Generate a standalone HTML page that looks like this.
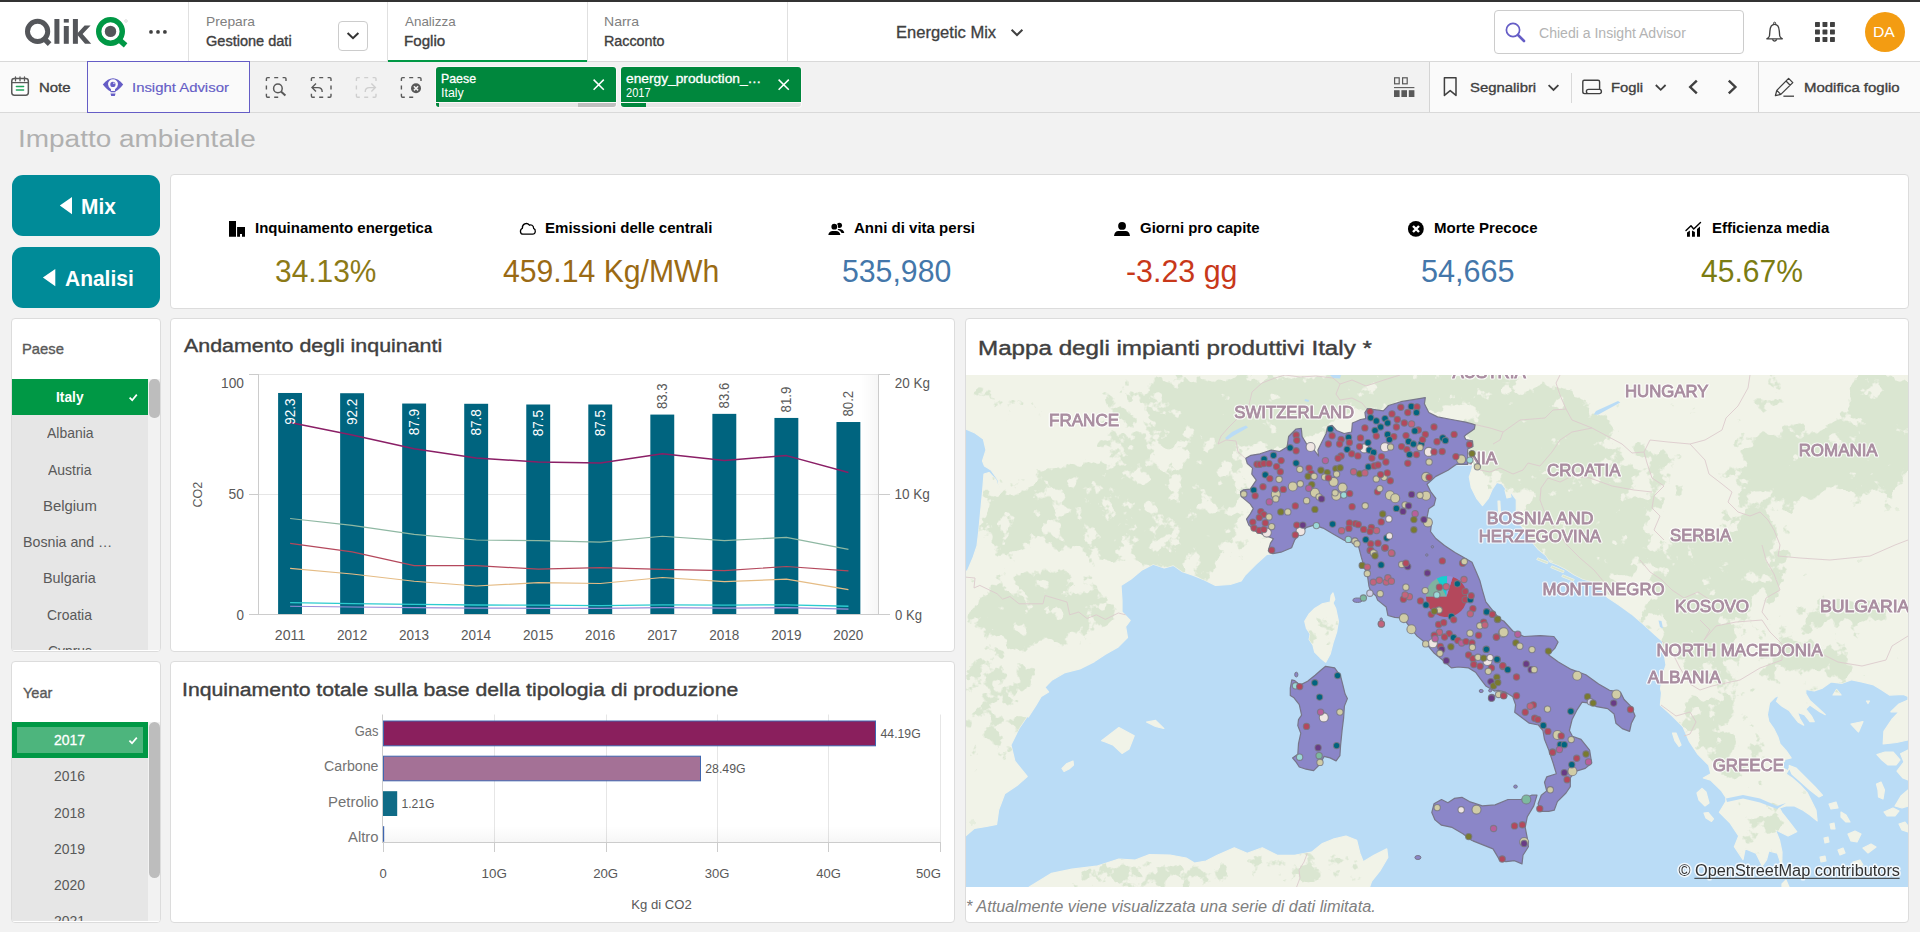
<!DOCTYPE html>
<html>
<head>
<meta charset="utf-8">
<title>Energetic Mix</title>
<style>
*{box-sizing:border-box;margin:0;padding:0}
html,body{width:1920px;height:932px;overflow:hidden;background:#f2f2f2;font-family:"Liberation Sans",sans-serif;color:#404040}
.abs{position:absolute}
.t{position:absolute;white-space:nowrap;line-height:1;transform-origin:0 50%}
#topline{left:0;top:0;width:1920px;height:2px;background:#333}
#header{left:0;top:2px;width:1920px;height:60px;background:#fff;border-bottom:1px solid #d9d9d9}
#toolbar{left:0;top:62px;width:1920px;height:51px;background:#f2f2f2;border-bottom:1px solid #d9d9d9}
.vdiv{position:absolute;width:1px;background:#e0e0e0}
.panel{position:absolute;background:#fff;border:1px solid #dcdcdc;border-radius:4px;overflow:hidden}
.btn{position:absolute;left:12px;width:148px;height:61px;background:#008b98;border-radius:11px;color:#fff}
.li{position:absolute;left:0;width:136px;height:36px;text-align:center;font-size:14.5px;line-height:36px;color:#595959}
</style>
</head>
<body>
<div class="abs" id="topline"></div>
<div class="abs" id="header"></div>
<svg class="abs" style="left:20px;top:12px" width="115" height="40" viewBox="20 12 115 40">
<g fill="none" stroke="#54565a" stroke-width="5">
<circle cx="37.6" cy="31.4" r="10.1"/>
<path d="M43.6 38.2 L49.6 44.2" stroke-width="5.2"/>
</g>
<g fill="#54565a">
<rect x="54.4" y="19" width="5" height="24.8"/>
<rect x="63.8" y="26" width="5" height="17.8"/>
<rect x="63.8" y="19" width="5" height="3.6"/>
<rect x="72.9" y="19" width="5" height="24.8"/>
<path d="M77.5 33.2 L84.6 25.6 L90.6 25.6 L82.6 34 L91.2 43.8 L85 43.8 L77.5 35 Z"/>
</g>
<circle cx="110.5" cy="31.4" r="11.8" fill="none" stroke="#009845" stroke-width="5.4"/>
<path d="M119 39.6 L125.6 45.4" stroke="#009845" stroke-width="5.4" fill="none"/>
<circle cx="110.5" cy="31.4" r="5.7" fill="#54565a"/>
<circle cx="126" cy="21" r="1.3" fill="none" stroke="#bbb" stroke-width="0.5"/>
</svg>
<svg class="abs" style="left:147px;top:28px" width="22" height="8"><g fill="#404040"><circle cx="4" cy="3.9" r="1.9"/><circle cx="11" cy="3.9" r="1.9"/><circle cx="17.9" cy="3.9" r="1.9"/></g></svg>
<div class="vdiv" style="left:188px;top:2px;height:59px"></div>
<div class="vdiv" style="left:387px;top:2px;height:59px"></div>
<div class="vdiv" style="left:587px;top:2px;height:59px"></div>
<div class="vdiv" style="left:787px;top:2px;height:59px"></div>
<div class="t" style="left:205.50px;top:15px;font-size:13.4px;color:#808080;transform:scaleX(1.0293);">Prepara</div>
<div class="t" style="left:205.87px;top:35px;font-size:13.8px;color:#404040;transform:scaleX(1.0531);-webkit-text-stroke:0.35px #404040;">Gestione dati</div>
<div class="abs" style="left:338px;top:21px;width:30px;height:30px;border:1px solid #ccc;border-radius:4px;background:#fff"></div>
<svg class="abs" style="left:345px;top:30px" width="16" height="12"><path d="M2.6 3 L8 8.2 L13.4 3" fill="none" stroke="#333" stroke-width="2"/></svg>
<div class="t" style="left:405.00px;top:15px;font-size:13.4px;color:#808080;">Analizza</div>
<div class="t" style="left:403.79px;top:35px;font-size:13.8px;color:#404040;transform:scaleX(1.0967);-webkit-text-stroke:0.35px #404040;">Foglio</div>
<div class="abs" style="left:388px;top:60px;width:199px;height:2px;background:#009845"></div>
<div class="t" style="left:604.38px;top:15px;font-size:13.4px;color:#808080;transform:scaleX(1.0485);">Narra</div>
<div class="t" style="left:604.36px;top:35px;font-size:13.8px;color:#404040;transform:scaleX(1.0367);-webkit-text-stroke:0.35px #404040;">Racconto</div>
<div class="t" style="left:895.68px;top:24px;font-size:16.3px;color:#404040;transform:scaleX(1.0153);-webkit-text-stroke:0.3px #404040;">Energetic Mix</div>
<svg class="abs" style="left:1009px;top:26px" width="16" height="12"><path d="M2.6 3.8 L8 9 L13.4 3.8" fill="none" stroke="#404040" stroke-width="2"/></svg>
<div class="abs" style="left:1494px;top:10px;width:250px;height:44px;border:1px solid #ccc;border-radius:4px;background:#fff"></div>
<svg class="abs" style="left:1503px;top:20px" width="24" height="24"><circle cx="10" cy="10" r="6.6" fill="none" stroke="#655dc6" stroke-width="1.7"/><path d="M15 15 L21 21" stroke="#655dc6" stroke-width="2.6" stroke-linecap="round"/></svg>
<div class="t" style="left:1539.30px;top:27px;font-size:13.8px;color:#b3b3b3;transform:scaleX(1.0183);">Chiedi a Insight Advisor</div>
<svg class="abs" style="left:1763px;top:20px" width="24" height="24" viewBox="0 0 24 24"><path d="M11.6 4.3 C8.4 4.3 7.1 7.4 6.9 11 L6.5 15.8 C6.3 17.6 4.8 18 3.9 18.8 L19.3 18.8 C18.4 18 16.9 17.6 16.7 15.8 L16.3 11 C16.1 7.4 14.8 4.3 11.6 4.3 Z" fill="none" stroke="#404040" stroke-width="1.35" stroke-linejoin="round"/><circle cx="11.6" cy="3.3" r="1.1" fill="none" stroke="#404040" stroke-width="1"/><path d="M9.4 19.4 Q11.6 23 13.8 19.4" fill="none" stroke="#404040" stroke-width="1.3"/></svg>
<svg class="abs" style="left:1815px;top:22px" width="20" height="20"><g fill="#404040"><rect x="0.0" y="0.0" width="4.9" height="4.9" rx="0.6"/><rect x="7.5" y="0.0" width="4.9" height="4.9" rx="0.6"/><rect x="15.0" y="0.0" width="4.9" height="4.9" rx="0.6"/><rect x="0.0" y="7.5" width="4.9" height="4.9" rx="0.6"/><rect x="7.5" y="7.5" width="4.9" height="4.9" rx="0.6"/><rect x="15.0" y="7.5" width="4.9" height="4.9" rx="0.6"/><rect x="0.0" y="15.0" width="4.9" height="4.9" rx="0.6"/><rect x="7.5" y="15.0" width="4.9" height="4.9" rx="0.6"/><rect x="15.0" y="15.0" width="4.9" height="4.9" rx="0.6"/></g></svg>
<div class="abs" style="left:1865px;top:12px;width:40px;height:40px;border-radius:20px;background:#f39c12"></div>
<div class="t" style="left:1873.44px;top:25px;font-size:14px;color:#fff;transform:scaleX(1.1232);">DA</div>

<div class="abs" id="toolbar"></div>
<div class="abs" style="left:0;top:62px;width:87px;height:50px;background:#fafafa"></div>
<div class="abs" style="left:1430px;top:62px;width:490px;height:50px;background:#fafafa"></div>
<svg class="abs" style="left:9px;top:75px" width="22" height="24" viewBox="9 75 22 24">
<rect x="11.75" y="78.55" width="16.6" height="16.6" rx="2.6" fill="#fff" stroke="#595959" stroke-width="1.5"/>
<path d="M12 82.6 H28.2" stroke="#595959" stroke-width="1.3"/>
<path d="M15.5 76.9 V80.8 M20 76.9 V80.8 M24.5 76.9 V80.8" stroke="#595959" stroke-width="1.3" stroke-linecap="round"/>
<path d="M16.4 86.4 H23.6 M16.4 90.1 H23.6" stroke="#1fa35b" stroke-width="1.5" stroke-linecap="round"/>
</svg>
<div class="t" style="left:39.41px;top:81px;font-size:13.4px;color:#404040;transform:scaleX(1.1119);-webkit-text-stroke:0.35px #404040;">Note</div>
<div class="abs" style="left:87px;top:61px;width:163px;height:52px;border:1px solid #655dc6;background:#fafafa"></div>
<svg class="abs" style="left:102px;top:76px" width="23" height="22" viewBox="102 76 23 22">
<path d="M102.8 84.6 Q113 71.8 123.2 84.6 Q118.6 90.4 115.7 91.2 L115.3 92.3 H110.7 L110.3 91.2 Q107.4 90.4 102.8 84.6 Z" fill="#655dc6"/>
<path d="M108 84.3 A5 5 0 1 1 118 84.3 Q118 87 115 89.3 V91.1 H111 V89.3 Q108 87 108 84.3 Z" fill="#fafafa"/>
<circle cx="112.9" cy="84.4" r="2.6" fill="#655dc6"/>
<circle cx="113.9" cy="83.3" r="0.7" fill="#fafafa"/>
<path d="M110.5 93.4 H115.5 L114.8 95.9 H111.2 Z" fill="#655dc6"/>
</svg>
<div class="t" style="left:132.06px;top:81px;font-size:13.4px;color:#655dc6;transform:scaleX(1.1124);-webkit-text-stroke:0.15px #655dc6;">Insight Advisor</div>
<svg class="abs" style="left:260px;top:72px" width="170" height="30" viewBox="260 72 170 30"><g fill="none" stroke="#595959" stroke-width="1.4"><path d="M266.4 81.0 V78.8 Q266.4 77.6 267.59999999999997 77.6 H269.79999999999995 M282.6 77.6 H284.8 Q286.0 77.6 286.0 78.8 V81.0 M269.79999999999995 97.19999999999999 H267.59999999999997 Q266.4 97.19999999999999 266.4 95.99999999999999 V93.79999999999998 M274.2 77.6 H278.2 M274.2 97.19999999999999 H278.2 M266.4 85.39999999999999 V89.39999999999999"/></g><circle cx="277.9" cy="88.4" r="4.3" fill="none" stroke="#595959" stroke-width="1.5"/><path d="M281 91.6 L285.4 95.6" stroke="#595959" stroke-width="2"/><g fill="none" stroke="#595959" stroke-width="1.4"><path d="M311.4 81.0 V78.8 Q311.4 77.6 312.59999999999997 77.6 H314.79999999999995 M327.6 77.6 H329.8 Q331.0 77.6 331.0 78.8 V81.0 M331.0 93.79999999999998 V95.99999999999999 Q331.0 97.19999999999999 329.8 97.19999999999999 H327.6 M314.79999999999995 97.19999999999999 H312.59999999999997 Q311.4 97.19999999999999 311.4 95.99999999999999 V93.79999999999998 M319.2 77.6 H323.2 M319.2 97.19999999999999 H323.2 M331.0 85.39999999999999 V89.39999999999999"/></g><path d="M316 83.6 L312 87.6 L316 91.6 M312.4 87.6 H318 Q322.2 87.6 322.2 92" fill="none" stroke="#595959" stroke-width="1.4"/><g fill="none" stroke="#cfcfcf" stroke-width="1.4"><path d="M356.4 81.0 V78.8 Q356.4 77.6 357.59999999999997 77.6 H359.79999999999995 M372.6 77.6 H374.8 Q376.0 77.6 376.0 78.8 V81.0 M376.0 93.79999999999998 V95.99999999999999 Q376.0 97.19999999999999 374.8 97.19999999999999 H372.6 M359.79999999999995 97.19999999999999 H357.59999999999997 Q356.4 97.19999999999999 356.4 95.99999999999999 V93.79999999999998 M364.2 77.6 H368.2 M364.2 97.19999999999999 H368.2 M356.4 85.39999999999999 V89.39999999999999"/></g><path d="M371.4 83.6 L375.4 87.6 L371.4 91.6 M375 87.6 H369.4 Q365.2 87.6 365.2 92" fill="none" stroke="#cfcfcf" stroke-width="1.4"/><g fill="none" stroke="#595959" stroke-width="1.4"><path d="M401.4 81.0 V78.8 Q401.4 77.6 402.59999999999997 77.6 H404.79999999999995 M417.6 77.6 H419.8 Q421.0 77.6 421.0 78.8 V81.0 M404.79999999999995 97.19999999999999 H402.59999999999997 Q401.4 97.19999999999999 401.4 95.99999999999999 V93.79999999999998 M409.2 77.6 H413.2 M409.2 97.19999999999999 H413.2 M401.4 85.39999999999999 V89.39999999999999"/></g><circle cx="416" cy="88.3" r="5" fill="#595959"/><path d="M413.9 86.2 L418.1 90.4 M418.1 86.2 L413.9 90.4" stroke="#f2f2f2" stroke-width="1.5"/></svg>
<div class="abs" style="left:435px;top:66px;width:182px;height:42px;background:#fcf8f9;border-radius:4px"></div><div class="abs" style="left:436px;top:67px;width:180px;height:35px;background:#00873d;border-radius:3px 3px 0 0"></div><div class="abs" style="left:436px;top:103px;width:180px;height:4px;background:#e6e6e6;border-radius:0 0 3px 3px;overflow:hidden"><div class="abs" style="left:0;top:0;width:3px;height:4px;background:#00873d"></div><div class="abs" style="left:142px;top:0;width:38px;height:4px;background:#bfbfbf"></div></div>
<div class="t" style="left:440.81px;top:72px;font-size:13px;color:#fff;transform:scaleX(0.9502);-webkit-text-stroke:0.3px #fff;">Paese</div>
<div class="t" style="left:440.68px;top:87px;font-size:12px;color:#fff;transform:scaleX(1.0345);">Italy</div>
<svg class="abs" style="left:592px;top:78px" width="14" height="14"><path d="M1.6 1.6 L11.8 11.8 M11.8 1.6 L1.6 11.8" stroke="#fff" stroke-width="1.5"/></svg>
<div class="abs" style="left:620px;top:66px;width:182px;height:42px;background:#fcf8f9;border-radius:4px"></div><div class="abs" style="left:621px;top:67px;width:180px;height:35px;background:#00873d;border-radius:3px 3px 0 0"></div><div class="abs" style="left:621px;top:103px;width:180px;height:4px;background:#e6e6e6;border-radius:0 0 3px 3px;overflow:hidden"><div class="abs" style="left:0;top:0;width:25px;height:4px;background:#00873d"></div></div>
<div class="t" style="left:626.25px;top:72px;font-size:13px;color:#fff;transform:scaleX(1.0580);-webkit-text-stroke:0.3px #fff;">energy_production_…</div>
<div class="t" style="left:626.25px;top:87px;font-size:12px;color:#fff;transform:scaleX(0.9233);">2017</div>
<svg class="abs" style="left:777px;top:78px" width="14" height="14"><path d="M1.6 1.6 L11.8 11.8 M11.8 1.6 L1.6 11.8" stroke="#fff" stroke-width="1.5"/></svg>
<svg class="abs" style="left:1392px;top:75px" width="24" height="24" viewBox="1392 75 24 24">
<g fill="none" stroke="#595959" stroke-width="1.2"><rect x="1394.6" y="77.8" width="4.6" height="6"/><rect x="1402.6" y="77.8" width="4.6" height="6"/></g>
<path d="M1394 87.6 H1414.4" stroke="#595959" stroke-width="1.1"/>
<g fill="#595959"><rect x="1394" y="90.2" width="5.6" height="6.8"/><rect x="1401.4" y="90.2" width="5.6" height="6.8"/><rect x="1408.8" y="90.2" width="5.6" height="6.8"/></g>
</svg>
<div class="vdiv" style="left:1429px;top:62px;height:50px;background:#d4d4d4"></div>
<svg class="abs" style="left:1441px;top:75px" width="18" height="24" viewBox="1441 75 18 24"><path d="M1444.4 77.8 H1456 V95.4 L1450.2 90.6 L1444.4 95.4 Z" fill="none" stroke="#404040" stroke-width="1.5" stroke-linejoin="round"/></svg>
<div class="t" style="left:1470.10px;top:81px;font-size:13.6px;color:#404040;transform:scaleX(1.0945);-webkit-text-stroke:0.35px #404040;">Segnalibri</div>
<svg class="abs" style="left:1546px;top:82px" width="16" height="12"><path d="M2.6 3.2 L7.5 8 L12.4 3.2" fill="none" stroke="#404040" stroke-width="1.8"/></svg>
<div class="vdiv" style="left:1571px;top:73px;height:30px;background:#d9d9d9"></div>
<svg class="abs" style="left:1580px;top:77px" width="24" height="20" viewBox="1580 77 24 20"><path d="M1584.2 80.2 H1598 Q1599.6 80.2 1599.6 81.8 V89.4 H1588.6 Q1586.4 89.4 1586.4 91.4 Q1586.4 93.6 1588.6 93.6 H1599.6 Q1601.4 93.6 1601.4 91.6 Q1601.4 89.4 1599.6 89.4 M1588.6 93.6 H1584.6 Q1582.8 93.6 1582.8 91.8 V81.8 Q1582.8 80.2 1584.2 80.2" fill="none" stroke="#404040" stroke-width="1.4"/></svg>
<div class="t" style="left:1611.42px;top:81px;font-size:13.6px;color:#404040;transform:scaleX(1.0866);-webkit-text-stroke:0.35px #404040;">Fogli</div>
<svg class="abs" style="left:1653px;top:82px" width="16" height="12"><path d="M2.8 3 L7.7 7.8 L12.6 3" fill="none" stroke="#404040" stroke-width="1.8"/></svg>
<svg class="abs" style="left:1685px;top:78px" width="16" height="18"><path d="M11.8 2.6 L5.2 9 L11.8 15.4" fill="none" stroke="#404040" stroke-width="2.4"/></svg>
<svg class="abs" style="left:1724px;top:78px" width="16" height="18"><path d="M4.8 2.6 L11.4 9 L4.8 15.4" fill="none" stroke="#404040" stroke-width="2.4"/></svg>
<div class="vdiv" style="left:1758px;top:62px;height:50px;background:#d4d4d4"></div>
<svg class="abs" style="left:1772px;top:75px" width="24" height="24" viewBox="1772 75 24 24"><path d="M1775.4 95.6 L1776.8 90.4 L1788.6 78.4 L1792.8 82.6 L1780.8 94.4 Z M1786 81 L1790.2 85.2 M1776.8 90.4 L1780.8 94.4" fill="none" stroke="#404040" stroke-width="1.3" stroke-linejoin="round"/><path d="M1783.4 96.2 H1794" stroke="#404040" stroke-width="1.3"/></svg>
<div class="t" style="left:1803.60px;top:81px;font-size:13.6px;color:#404040;transform:scaleX(1.1006);-webkit-text-stroke:0.35px #404040;">Modifica foglio</div>


<div class="t" style="left:18.28px;top:127px;font-size:24.7px;color:#b0b0b0;transform:scaleX(1.1320);">Impatto ambientale</div>
<div class="btn" style="top:175px"></div>
<div class="btn" style="top:247px"></div>
<svg class="abs" style="left:12px;top:175px" width="148" height="133" viewBox="12 175 148 133"><path d="M59.8 205.6 L72 197 V214.2 Z M42.9 277.5 L55.3 268.9 V286.2 Z" fill="#fff"/></svg>
<div class="t" style="left:81.15px;top:197px;font-size:21.4px;color:#fff;font-weight:bold;transform:scaleX(0.9755);">Mix</div>
<div class="t" style="left:65.28px;top:269px;font-size:21.4px;color:#fff;font-weight:bold;transform:scaleX(0.9800);">Analisi</div>


<div class="panel" id="kpi" style="left:170px;top:174px;width:1739px;height:135px">
<div class="t" style="left:83.60px;top:45px;font-size:15.2px;color:#000;font-weight:bold;transform:scaleX(0.9860);">Inquinamento energetica</div>
<div class="t" style="left:374.30px;top:45px;font-size:15.2px;color:#000;font-weight:bold;transform:scaleX(0.9913);">Emissioni delle centrali</div>
<div class="t" style="left:683.40px;top:45px;font-size:15.2px;color:#000;font-weight:bold;transform:scaleX(0.9889);">Anni di vita persi</div>
<div class="t" style="left:969.30px;top:45px;font-size:15.2px;color:#000;font-weight:bold;transform:scaleX(0.9848);">Giorni pro capite</div>
<div class="t" style="left:1262.50px;top:45px;font-size:15.2px;color:#000;font-weight:bold;transform:scaleX(0.9893);">Morte Precoce</div>
<div class="t" style="left:1540.70px;top:45px;font-size:15.2px;color:#000;font-weight:bold;transform:scaleX(0.9856);">Efficienza media</div>
<div class="t" style="left:103.50px;top:81px;font-size:30.6px;color:#8c7a17;transform:scaleX(0.9774);">34.13%</div>
<div class="t" style="left:332.40px;top:81px;font-size:30.6px;color:#9a6a14;transform:scaleX(0.9864);">459.14 Kg/MWh</div>
<div class="t" style="left:671.09px;top:81px;font-size:30.6px;color:#4477aa;transform:scaleX(0.9878);">535,980</div>
<div class="t" style="left:955.38px;top:81px;font-size:30.6px;color:#c8381a;transform:scaleX(0.9932);">-3.23 gg</div>
<div class="t" style="left:1249.98px;top:81px;font-size:30.6px;color:#4477aa;">54,665</div>
<div class="t" style="left:1530.40px;top:81px;font-size:30.6px;color:#7b7c12;transform:scaleX(0.9814);">45.67%</div>
<svg class="abs" style="left:0;top:0" width="1737" height="133" viewBox="171 175 1737 133"><path d="M229 221 H236 V236.8 H229 Z M237.1 227 H245 V236.8 H242 V233.9 H240 V236.8 H237.1 Z" fill="#000"/><path d="M523.2 234.2 C520 234.2 519.4 229.8 522.4 228.2 C522 224.4 526.6 221.6 529.4 225.2 C530.6 224.4 533.8 225 533.6 228.4 C536.2 229.6 535.8 234.2 532.6 234.2 Z" fill="none" stroke="#000" stroke-width="1.3" stroke-linejoin="round"/><circle cx="839.4" cy="225.3" r="2.6" fill="#000"/><circle cx="834.3" cy="226.7" r="3.7" fill="#fff"/><path d="M838 229 Q843.6 228.6 844.3 232.9 L841.6 232.9 Q840.6 230.6 837.8 229.8 Z" fill="#000"/><circle cx="834.3" cy="226.7" r="2.9" fill="#000"/><path d="M828.3 235 C828.6 232.4 830.4 230.9 832.6 230.9 H836 C838.2 230.9 840 232.4 840.4 235 Z" fill="#000"/><circle cx="1122.05" cy="225.9" r="3.9" fill="#000"/><path d="M1114 236 C1114.4 232.6 1116 230.9 1118.4 230.9 H1125.6 C1128 230.9 1129.6 232.6 1130 236 Z" fill="#000"/><circle cx="1415.85" cy="228.9" r="7.9" fill="#000"/><path d="M1413 226 L1419 232 M1419 226 L1413 232" stroke="#fff" stroke-width="2.4"/><path d="M1687 232.5 L1689.9 230.5 V236.8 H1687 Z M1692 230.5 L1694.9 232 V236.8 H1692 Z M1697 229 L1700 226.6 V236.8 H1697 Z" fill="#000"/><path d="M1686 230.5 L1691 225.8 L1693.7 229 L1700.5 222.6" fill="none" stroke="#000" stroke-width="1.4" stroke-linecap="round" stroke-linejoin="round"/></svg>

</div>

<div class="panel" id="paese" style="left:11px;top:318px;width:150px;height:334px">
<div class="t" style="left:10.22px;top:23px;font-size:14.3px;color:#595959;transform:scaleX(1.0335);-webkit-text-stroke:0.35px #595959;">Paese</div>
<div class="abs" style="left:0;top:60px;width:136px;height:272px;background:#e6e6e6"></div>
<div class="abs" style="left:136px;top:60px;width:12px;height:272px;background:#f2f2f2"></div>
<div class="abs" style="left:0;top:60px;width:136px;height:36px;background:#009845"></div>
<div class="abs" style="left:137.4px;top:60px;width:10.4px;height:39px;background:#bdbdbd;border-radius:5px"></div>
<div class="t" style="left:43.72px;top:71px;font-size:14.3px;color:#fff;font-weight:bold;transform:scaleX(0.9624);">Italy</div>
<svg class="abs" style="left:115px;top:72px" width="14" height="14" viewBox="127 391 14 14"><path d="M129.6 397.6 L132.2 400.2 L136.8 394.6" fill="none" stroke="#fff" stroke-width="1.7"/></svg>
<div class="t" style="left:34.50px;top:107px;font-size:14.3px;color:#595959;transform:scaleX(0.9757);">Albania</div>
<div class="t" style="left:36.00px;top:144px;font-size:14.3px;color:#595959;transform:scaleX(0.9772);">Austria</div>
<div class="t" style="left:30.76px;top:180px;font-size:14.3px;color:#595959;transform:scaleX(1.0419);">Belgium</div>
<div class="t" style="left:30.80px;top:252px;font-size:14.3px;color:#595959;transform:scaleX(1.0071);">Bulgaria</div>
<div class="t" style="left:34.95px;top:289px;font-size:14.3px;color:#595959;transform:scaleX(0.9742);">Croatia</div>
<div class="t" style="left:35.71px;top:325px;font-size:14.3px;color:#595959;transform:scaleX(0.9686);">Cyprus</div>
<div class="t" style="left:10.66px;top:216px;font-size:14.3px;color:#595959;transform:scaleX(0.9942);">Bosnia and …</div>
<div class="abs" style="left:0;top:331.4px;width:148px;height:3px;background:#fff"></div>

</div>
<div class="panel" id="combo" style="left:170px;top:318px;width:785px;height:334px">
<div class="t" style="left:12.50px;top:17px;font-size:19.2px;color:#404040;transform:scaleX(1.1155);-webkit-text-stroke:0.4px #404040;">Andamento degli inquinanti</div>
<svg class="abs" style="left:0;top:0" width="783" height="332" viewBox="171 319 783 332" font-family="Liberation Sans, sans-serif"><path d="M259 374.5 H879 M259 494.5 H879" stroke="#e6e6e6" stroke-width="1" fill="none"/><defs><linearGradient id="shd" x1="0" x2="1" y1="0" y2="0"><stop offset="0" stop-color="#000" stop-opacity="0"/><stop offset="1" stop-color="#000" stop-opacity="0.035"/></linearGradient></defs><rect x="861" y="375" width="17.5" height="239" fill="url(#shd)"/><rect x="278.10" y="392.98" width="23.9" height="221.52" fill="#00647f"/><rect x="340.14" y="393.22" width="23.9" height="221.28" fill="#00647f"/><rect x="402.18" y="403.54" width="23.9" height="210.96" fill="#00647f"/><rect x="464.22" y="403.78" width="23.9" height="210.72" fill="#00647f"/><rect x="526.26" y="404.50" width="23.9" height="210.00" fill="#00647f"/><rect x="588.30" y="404.50" width="23.9" height="210.00" fill="#00647f"/><rect x="650.34" y="414.58" width="23.9" height="199.92" fill="#00647f"/><rect x="712.38" y="413.86" width="23.9" height="200.64" fill="#00647f"/><rect x="774.42" y="417.94" width="23.9" height="196.56" fill="#00647f"/><rect x="836.46" y="422.02" width="23.9" height="192.48" fill="#00647f"/><path d="M249 374.5 H259 M249 494.5 H259 M249 614.5 H879 M258.5 374.5 V614.5" stroke="#cccccc" stroke-width="1" fill="none"/><path d="M878.5 374.5 V614.5 M878.5 374.5 H890 M878.5 494.5 H890 M878.5 614.5 H890" stroke="#cccccc" stroke-width="1" fill="none"/><path d="M290.10 602.70 L352.14 603.60 L414.18 604.40 L476.22 605.00 L538.26 605.20 L600.30 605.60 L662.34 604.80 L724.38 605.20 L786.42 604.80 L848.46 606.25" fill="none" stroke="#2ccccf" stroke-width="1.3" stroke-linejoin="round"/><path d="M290.10 606.25 L352.14 607.00 L414.18 607.60 L476.22 608.10 L538.26 608.30 L600.30 608.30 L662.34 607.70 L724.38 608.10 L786.42 607.70 L848.46 609.20" fill="none" stroke="#9b8fdb" stroke-width="1.2" stroke-linejoin="round"/><path d="M290.10 568.30 L352.14 574.00 L414.18 581.25 L476.22 586.00 L538.26 582.70 L600.30 583.50 L662.34 577.50 L724.38 581.70 L786.42 579.20 L848.46 589.60" fill="none" stroke="#e5bc85" stroke-width="1.2" stroke-linejoin="round"/><path d="M290.10 543.30 L352.14 551.90 L414.18 565.60 L476.22 565.60 L538.26 569.20 L600.30 567.70 L662.34 569.40 L724.38 570.60 L786.42 566.50 L848.46 570.80" fill="none" stroke="#b4485c" stroke-width="1.2" stroke-linejoin="round"/><path d="M290.10 518.50 L352.14 525.40 L414.18 534.40 L476.22 540.00 L538.26 540.60 L600.30 542.10 L662.34 536.25 L724.38 540.60 L786.42 537.30 L848.46 549.40" fill="none" stroke="#8fb8a3" stroke-width="1.2" stroke-linejoin="round"/><path d="M290.10 422.50 L352.14 435.00 L414.18 448.75 L476.22 458.00 L538.26 462.00 L600.30 463.10 L662.34 453.75 L724.38 460.40 L786.42 455.60 L848.46 472.50" fill="none" stroke="#8a1f66" stroke-width="1.5" stroke-linejoin="round"/><text x="295.39" y="398.98" font-size="14" fill="#ffffff" text-anchor="end" textLength="26.23" lengthAdjust="spacingAndGlyphs" transform="rotate(-90 294.90 398.98)">92.3</text><text x="357.56" y="399.22" font-size="14" fill="#ffffff" text-anchor="end" textLength="26.37" lengthAdjust="spacingAndGlyphs" transform="rotate(-90 356.94 399.22)">92.2</text><text x="419.60" y="409.54" font-size="14" fill="#ffffff" text-anchor="end" textLength="26.37" lengthAdjust="spacingAndGlyphs" transform="rotate(-90 418.98 409.54)">87.9</text><text x="481.51" y="409.78" font-size="14" fill="#ffffff" text-anchor="end" textLength="26.23" lengthAdjust="spacingAndGlyphs" transform="rotate(-90 481.02 409.78)">87.8</text><text x="543.55" y="410.50" font-size="14" fill="#ffffff" text-anchor="end" textLength="26.23" lengthAdjust="spacingAndGlyphs" transform="rotate(-90 543.06 410.50)">87.5</text><text x="605.59" y="410.50" font-size="14" fill="#ffffff" text-anchor="end" textLength="26.23" lengthAdjust="spacingAndGlyphs" transform="rotate(-90 605.10 410.50)">87.5</text><text x="666.61" y="408.58" font-size="14" fill="#595959" textLength="25.60" lengthAdjust="spacingAndGlyphs" transform="rotate(-90 667.14 408.58)">83.3</text><text x="728.65" y="407.86" font-size="14" fill="#595959" textLength="25.60" lengthAdjust="spacingAndGlyphs" transform="rotate(-90 729.18 407.86)">83.6</text><text x="790.69" y="411.94" font-size="14" fill="#595959" textLength="25.74" lengthAdjust="spacingAndGlyphs" transform="rotate(-90 791.22 411.94)">81.9</text><text x="852.73" y="416.02" font-size="14" fill="#595959" textLength="25.74" lengthAdjust="spacingAndGlyphs" transform="rotate(-90 853.26 416.02)">80.2</text><text x="243.93" y="388.00" font-size="14" fill="#595959" text-anchor="end" textLength="22.89" lengthAdjust="spacingAndGlyphs">100</text><text x="243.85" y="499.40" font-size="14" fill="#595959" text-anchor="end" textLength="15.40" lengthAdjust="spacingAndGlyphs">50</text><text x="243.89" y="619.60" font-size="14" fill="#595959" text-anchor="end" textLength="7.49" lengthAdjust="spacingAndGlyphs">0</text><text x="894.73" y="388.00" font-size="14" fill="#595959" textLength="35.19" lengthAdjust="spacingAndGlyphs">20 Kg</text><text x="894.45" y="499.40" font-size="14" fill="#595959" textLength="35.47" lengthAdjust="spacingAndGlyphs">10 Kg</text><text x="895.01" y="619.60" font-size="14" fill="#595959" textLength="26.94" lengthAdjust="spacingAndGlyphs">0 Kg</text><text x="290.10" y="640.00" font-size="14" fill="#595959" text-anchor="middle" textLength="30.42" lengthAdjust="spacingAndGlyphs">2011</text><text x="352.10" y="640.00" font-size="14" fill="#595959" text-anchor="middle" textLength="30.28" lengthAdjust="spacingAndGlyphs">2012</text><text x="414.07" y="640.00" font-size="14" fill="#595959" text-anchor="middle" textLength="30.14" lengthAdjust="spacingAndGlyphs">2013</text><text x="476.05" y="640.00" font-size="14" fill="#595959" text-anchor="middle" textLength="30.00" lengthAdjust="spacingAndGlyphs">2014</text><text x="538.15" y="640.00" font-size="14" fill="#595959" text-anchor="middle" textLength="30.14" lengthAdjust="spacingAndGlyphs">2015</text><text x="600.19" y="640.00" font-size="14" fill="#595959" text-anchor="middle" textLength="30.14" lengthAdjust="spacingAndGlyphs">2016</text><text x="662.30" y="640.00" font-size="14" fill="#595959" text-anchor="middle" textLength="30.28" lengthAdjust="spacingAndGlyphs">2017</text><text x="724.27" y="640.00" font-size="14" fill="#595959" text-anchor="middle" textLength="30.14" lengthAdjust="spacingAndGlyphs">2018</text><text x="786.38" y="640.00" font-size="14" fill="#595959" text-anchor="middle" textLength="30.28" lengthAdjust="spacingAndGlyphs">2019</text><text x="848.35" y="640.00" font-size="14" fill="#595959" text-anchor="middle" textLength="30.14" lengthAdjust="spacingAndGlyphs">2020</text><text x="201.58" y="494.60" font-size="13" fill="#595959" text-anchor="middle" textLength="25.60" lengthAdjust="spacingAndGlyphs" transform="rotate(-90 201.60 494.60)">CO2</text></svg>

</div>
<div class="panel" id="year" style="left:11px;top:661px;width:150px;height:262px">
<div class="t" style="left:11.01px;top:24px;font-size:14.3px;color:#595959;transform:scaleX(1.0156);-webkit-text-stroke:0.35px #595959;">Year</div>
<div class="abs" style="left:0;top:60px;width:136px;height:200px;background:#e6e6e6"></div>
<div class="abs" style="left:136px;top:60px;width:12px;height:200px;background:#f2f2f2"></div>
<div class="abs" style="left:0;top:60px;width:136px;height:36px;background:#4db57d;border:5px solid #009845"></div>
<div class="abs" style="left:137px;top:60px;width:11px;height:156px;background:#bdbdbd;border-radius:5.5px"></div>
<div class="t" style="left:42.10px;top:71px;font-size:14.3px;color:#fff;transform:scaleX(0.9784);-webkit-text-stroke:0.3px #fff;">2017</div>
<svg class="abs" style="left:115px;top:72px" width="14" height="14" viewBox="127 734 14 14"><path d="M129.4 740.6 L132 743.2 L136.8 737.6" fill="none" stroke="#fff" stroke-width="1.7"/></svg>
<div class="t" style="left:42.10px;top:107px;font-size:14.3px;color:#595959;transform:scaleX(0.9738);">2016</div>
<div class="t" style="left:42.10px;top:144px;font-size:14.3px;color:#595959;transform:scaleX(0.9738);">2018</div>
<div class="t" style="left:42.10px;top:180px;font-size:14.3px;color:#595959;transform:scaleX(0.9784);">2019</div>
<div class="t" style="left:42.10px;top:216px;font-size:14.3px;color:#595959;transform:scaleX(0.9738);">2020</div>
<div class="t" style="left:42.10px;top:252px;font-size:14.3px;color:#595959;transform:scaleX(0.9784);">2021</div>
<div class="abs" style="left:0;top:259px;width:148px;height:3px;background:#fff"></div>

</div>
<div class="panel" id="bars" style="left:170px;top:661px;width:785px;height:262px">
<div class="t" style="left:11.29px;top:18px;font-size:19.2px;color:#404040;transform:scaleX(1.1047);-webkit-text-stroke:0.4px #404040;">Inquinamento totale sulla base della tipologia di produzione</div>
<svg class="abs" style="left:0;top:0" width="783" height="260" viewBox="171 662 783 260" font-family="Liberation Sans, sans-serif"><defs><linearGradient id="shb" x1="0" x2="0" y1="0" y2="1"><stop offset="0" stop-color="#000" stop-opacity="0"/><stop offset="1" stop-color="#000" stop-opacity="0.035"/></linearGradient></defs><path d="M494.5 714.5 V842 M606.5 714.5 V842 M717.5 714.5 V842 M828.5 714.5 V842 M940.5 714.5 V842 " stroke="#e6e6e6" stroke-width="1" fill="none"/><rect x="383" y="826" width="557" height="16" fill="url(#shb)"/><rect x="383.5" y="721" width="492.0" height="24.8" fill="#8a1f5d" stroke="#3f66b0" stroke-width="1"/><rect x="383.5" y="756.2" width="317.0" height="24.6" fill="#a47196" stroke="#3f66b0" stroke-width="1"/><rect x="383" y="791.2" width="14.2" height="24.8" fill="#0f6b86"/><rect x="383" y="826.2" width="1.2" height="15.6" fill="#3f66b0"/><path d="M382.5 714.5 V842 M382 842.5 H940 M383.5 842 V852 M494.5 842 V852 M606.5 842 V852 M717.5 842 V852 M828.5 842 V852 M940.5 842 V852 " stroke="#cccccc" stroke-width="1" fill="none"/><text x="378.44" y="736.10" font-size="14" fill="#737373" text-anchor="end" textLength="23.68" lengthAdjust="spacingAndGlyphs">Gas</text><text x="378.51" y="771.40" font-size="14" fill="#737373" text-anchor="end" textLength="54.41" lengthAdjust="spacingAndGlyphs">Carbone</text><text x="378.60" y="806.50" font-size="14" fill="#737373" text-anchor="end" textLength="50.49" lengthAdjust="spacingAndGlyphs">Petrolio</text><text x="378.54" y="841.60" font-size="14" fill="#737373" text-anchor="end" textLength="30.54" lengthAdjust="spacingAndGlyphs">Altro</text><text x="880.56" y="737.50" font-size="12.2" fill="#595959" textLength="40.10" lengthAdjust="spacingAndGlyphs">44.19G</text><text x="705.29" y="773.00" font-size="12.2" fill="#595959" textLength="40.27" lengthAdjust="spacingAndGlyphs">28.49G</text><text x="401.45" y="807.80" font-size="12.2" fill="#595959" textLength="33.13" lengthAdjust="spacingAndGlyphs">1.21G</text><text x="383.04" y="877.80" font-size="12.2" fill="#595959" text-anchor="middle" textLength="7.26" lengthAdjust="spacingAndGlyphs">0</text><text x="494.16" y="877.80" font-size="12.2" fill="#595959" text-anchor="middle" textLength="25.27" lengthAdjust="spacingAndGlyphs">10G</text><text x="605.65" y="877.80" font-size="12.2" fill="#595959" text-anchor="middle" textLength="24.99" lengthAdjust="spacingAndGlyphs">20G</text><text x="717.14" y="877.80" font-size="12.2" fill="#595959" text-anchor="middle" textLength="24.71" lengthAdjust="spacingAndGlyphs">30G</text><text x="828.56" y="877.80" font-size="12.2" fill="#595959" text-anchor="middle" textLength="24.57" lengthAdjust="spacingAndGlyphs">40G</text><text x="940.92" y="877.80" font-size="12.2" fill="#595959" text-anchor="end" textLength="24.85" lengthAdjust="spacingAndGlyphs">50G</text><text x="661.56" y="909.00" font-size="12.6" fill="#595959" text-anchor="middle" textLength="60.41" lengthAdjust="spacingAndGlyphs">Kg di CO2</text></svg>

</div>
<div class="panel" id="map" style="left:965px;top:318px;width:944px;height:605px">
<div class="t" style="left:11.57px;top:19px;font-size:20px;color:#404040;transform:scaleX(1.2093);-webkit-text-stroke:0.4px #404040;">Mappa degli impianti produttivi Italy *</div>
<div class="t" style="left:0.49px;top:580px;font-size:16px;color:#808080;font-style:italic;transform:scaleX(1.0187);">* Attualmente viene visualizzata una serie di dati limitata.</div>
<svg class="abs" style="left:0;top:56px" width="942" height="512" viewBox="966 375 942 512" font-family="Liberation Sans, sans-serif"><defs><filter id="bl" x="-20%" y="-20%" width="140%" height="140%"><feGaussianBlur stdDeviation="7"/></filter><filter id="gn" x="966" y="375" width="942" height="512" filterUnits="userSpaceOnUse" color-interpolation-filters="sRGB"><feGaussianBlur in="SourceAlpha" stdDeviation="9" result="b"/><feTurbulence type="fractalNoise" baseFrequency="0.06" numOctaves="4" seed="7" result="n"/><feColorMatrix in="n" type="matrix" values="0 0 0 0 0  0 0 0 0 0  0 0 0 0 0  1.6 0 0 0 -0.3" result="na"/><feComposite in="b" in2="na" operator="arithmetic" k1="0" k2="1" k3="1" k4="-0.95" result="sum"/><feComponentTransfer in="sum" result="th"><feFuncA type="linear" slope="9" intercept="0"/></feComponentTransfer><feFlood flood-color="#dae6d1" result="fl"/><feComposite in="fl" in2="th" operator="in"/></filter><filter id="bl2" x="-20%" y="-20%" width="140%" height="140%"><feGaussianBlur stdDeviation="3.5"/></filter><clipPath id="lc"><path d="M966.0 375.0 L1908.0 375.0 L1908.0 696.5 L1903.4 694.4 L1889.5 695.1 L1881.1 689.5 L1872.8 684.6 L1861.6 681.9 L1851.8 679.8 L1842.1 683.3 L1830.9 681.9 L1822.5 688.1 L1814.2 690.9 L1805.8 689.5 L1805.8 693.7 L1810.0 700.7 L1817.0 707.0 L1825.3 714.6 L1819.7 711.8 L1810.0 704.9 L1805.8 709.0 L1811.4 716.0 L1814.2 721.6 L1810.0 721.6 L1804.4 714.6 L1797.4 712.5 L1800.0 719.0 L1803.7 725.1 L1798.0 722.0 L1793.2 716.0 L1789.1 710.5 L1782.1 706.3 L1776.5 701.4 L1779.3 695.1 L1775.1 697.2 L1769.5 702.8 L1767.4 714.6 L1768.8 721.6 L1773.7 728.6 L1777.9 737.0 L1780.0 743.9 L1786.3 750.9 L1791.1 757.9 L1784.9 759.3 L1783.5 766.2 L1789.0 769.0 L1786.0 774.0 L1792.0 778.0 L1800.0 785.0 L1807.4 793.0 L1816.0 810.2 L1817.1 820.9 L1810.0 815.0 L1803.1 810.2 L1794.5 805.9 L1786.0 806.0 L1779.5 808.0 L1781.7 812.3 L1790.2 823.1 L1796.7 831.7 L1788.1 836.0 L1780.0 832.0 L1775.2 829.5 L1779.5 840.2 L1782.0 852.0 L1781.7 866.0 L1777.4 853.1 L1768.8 851.0 L1766.6 859.6 L1762.3 866.0 L1755.9 853.1 L1745.2 848.8 L1743.0 859.6 L1734.4 846.7 L1738.7 836.0 L1730.2 823.1 L1719.4 812.3 L1725.9 801.6 L1725.9 797.3 L1721.6 790.9 L1710.8 780.2 L1703.3 778.0 L1710.8 773.7 L1708.7 765.1 L1698.0 754.4 L1689.4 741.5 L1682.9 726.5 L1672.2 715.8 L1660.4 705.0 L1661.5 693.0 L1660.6 688.7 L1662.4 675.9 L1666.0 665.0 L1664.2 654.0 L1662.4 641.3 L1655.1 634.9 L1644.1 624.8 L1631.4 613.9 L1618.6 604.8 L1607.7 597.5 L1595.2 582.2 L1583.2 579.2 L1574.2 574.7 L1565.2 568.7 L1557.7 564.9 L1550.1 561.9 L1545.6 555.2 L1538.1 549.2 L1530.6 540.1 L1523.1 528.1 L1517.8 520.6 L1516.3 510.1 L1516.3 499.6 L1511.8 493.6 L1506.6 489.8 L1502.1 483.8 L1496.8 482.3 L1492.3 489.1 L1488.5 498.1 L1482.5 505.6 L1476.5 498.1 L1471.3 487.6 L1469.3 477.0 L1471.5 470.8 L1473.0 464.6 L1466.0 460.0 L1400.0 455.0 L1300.0 500.0 L1272.8 553.7 L1266.9 554.3 L1255.9 564.3 L1244.9 575.4 L1241.2 580.9 L1230.2 584.5 L1215.5 585.4 L1204.5 579.9 L1193.5 575.4 L1182.5 571.7 L1173.3 565.3 L1164.2 568.0 L1153.2 564.3 L1142.1 569.9 L1131.1 579.0 L1121.0 585.4 L1122.0 601.0 L1122.0 612.0 L1130.2 620.3 L1125.6 626.7 L1127.5 637.7 L1118.3 646.9 L1105.4 654.3 L1094.4 661.6 L1079.8 668.9 L1065.1 672.6 L1052.2 679.9 L1044.9 687.3 L1048.6 691.9 L1041.2 696.5 L1035.7 705.6 L1028.4 717.0 L1027.2 716.3 L1019.0 728.5 L1010.9 744.9 L1014.9 761.2 L1027.2 776.5 L1017.0 785.6 L1004.7 793.8 L998.6 810.1 L996.6 824.4 L986.4 826.4 L974.2 828.5 L966.0 835.6 L966.0 572.0 L967.8 569.9 L973.3 557.0 L977.0 546.0 L978.8 531.0 L980.7 510.8 L982.5 492.4 L984.0 474.0 L989.0 472.5 L996.0 480.0 L1000.5 494.0 L998.0 480.0 L991.0 470.0 L984.5 466.0 L982.5 461.0 L986.0 450.0 L983.4 439.0 L975.0 433.0 L966.0 429.0 Z M1029.2 887.0 L1051.6 873.3 L1072.0 869.2 L1096.5 866.2 L1118.9 859.0 L1135.2 860.0 L1149.5 854.6 L1169.9 855.0 L1186.2 858.0 L1194.4 863.1 L1206.0 861.0 L1217.2 855.3 L1234.3 847.8 L1247.2 853.2 L1262.3 847.8 L1277.3 855.3 L1294.5 855.3 L1311.6 852.1 L1322.4 843.5 L1333.1 839.2 L1346.0 836.0 L1356.7 840.3 L1359.9 853.2 L1363.2 861.7 L1373.9 855.3 L1386.8 848.9 L1387.8 857.5 L1380.3 870.3 L1371.7 881.0 L1369.6 887.0 Z M1333.0 592.9 L1334.8 599.3 L1333.0 603.0 L1335.7 608.4 L1338.4 621.2 L1336.6 632.1 L1333.0 643.1 L1330.2 654.0 L1325.7 662.2 L1320.2 657.7 L1314.7 652.2 L1312.9 644.9 L1309.2 639.4 L1310.2 634.0 L1306.5 628.5 L1304.7 621.2 L1309.2 613.9 L1314.7 608.4 L1322.0 603.9 L1330.2 602.0 L1331.1 595.7 Z M1101.6 740.8 L1118.9 727.5 L1134.2 735.7 L1129.1 748.9 L1122.0 753.4 L1112.8 744.9 L1104.7 741.8 Z M1146.5 722.0 L1155.6 720.4 L1163.8 728.5 L1155.6 726.5 Z M1062.0 768.5 L1067.0 763.5 L1073.0 761.0 L1073.5 765.0 L1069.0 769.0 L1064.0 771.5 Z M1788.1 765.1 L1796.0 768.0 L1806.0 778.0 L1815.0 787.0 L1822.4 795.2 L1819.0 797.0 L1810.0 790.0 L1800.0 781.0 L1792.0 774.0 Z M1908.0 696.5 L1908.0 740.0 L1896.5 742.5 L1883.2 743.9 L1883.9 731.4 L1892.3 718.8 L1899.0 712.0 L1890.9 711.8 L1899.0 704.0 L1908.0 700.0 Z M1908.0 750.0 L1900.6 753.7 L1904.0 762.0 L1897.0 771.0 L1903.0 778.0 L1908.0 780.0 Z M1908.0 790.0 L1901.0 796.0 L1895.0 806.0 L1902.0 808.0 L1908.0 806.0 Z M1833.0 695.0 L1836.5 689.5 L1841.0 695.0 Z M1851.0 724.0 L1863.0 721.5 L1858.5 732.0 Z M1866.5 701.0 L1869.5 701.0 L1868.0 703.5 Z M1877.0 754.5 L1885.0 752.0 L1893.0 752.0 L1900.0 760.0 L1896.0 765.0 L1888.0 765.0 L1882.0 760.0 Z M1876.5 784.0 L1881.0 782.0 L1884.5 790.0 L1883.0 799.0 L1878.5 797.0 L1878.0 790.0 Z M1672.5 733.0 L1676.0 733.0 L1681.0 745.0 L1679.0 746.5 L1675.0 741.0 Z M1697.0 793.0 L1702.0 788.5 L1706.0 792.0 L1709.0 803.0 L1705.0 806.0 L1699.0 800.0 Z M1704.0 813.0 L1708.0 812.5 L1713.5 819.0 L1711.5 821.5 L1706.0 818.0 Z M1829.0 804.0 L1836.0 802.0 L1838.0 808.0 L1831.0 809.0 Z M1841.0 812.0 L1846.0 815.0 L1850.0 822.0 L1846.0 822.0 L1841.0 817.0 Z M1830.0 824.0 L1834.0 823.0 L1835.0 829.0 L1831.0 829.0 Z M1848.0 834.0 L1855.0 831.0 L1861.0 834.0 L1857.0 842.0 L1851.0 841.0 Z M1824.0 838.0 L1828.0 837.0 L1829.0 842.0 L1825.0 843.0 Z M1838.0 850.0 L1843.0 848.0 L1845.0 853.0 L1840.0 855.0 Z M1863.0 848.0 L1871.0 844.0 L1876.0 847.0 L1868.0 853.0 Z M1820.0 857.0 L1825.0 856.0 L1826.0 861.0 L1821.0 862.0 Z M1884.0 812.0 L1893.0 808.0 L1899.0 811.0 L1895.0 816.0 L1887.0 816.0 Z M1899.0 824.0 L1905.0 822.0 L1908.0 826.0 L1908.0 832.0 L1902.0 830.0 Z M1853.0 862.0 L1860.0 860.0 L1863.0 865.0 L1856.0 867.0 Z M1782.0 884.0 L1786.0 880.0 L1789.0 887.0 L1782.0 887.0 Z M1498.0 501.0 L1499.8 501.0 L1500.5 513.0 L1498.6 513.0 Z M1505.0 490.0 L1509.0 489.0 L1511.0 497.0 L1507.0 498.0 Z M1538.0 558.0 L1548.0 562.0 L1547.0 563.5 L1537.0 559.5 Z M1552.0 566.0 L1564.0 571.0 L1563.0 572.5 L1551.0 567.5 Z M1563.0 575.0 L1574.0 579.5 L1573.0 581.0 L1562.0 576.5 Z"/></clipPath></defs><rect x="966" y="375" width="942" height="512" fill="#badcf6"/><path d="M966.0 375.0 L1908.0 375.0 L1908.0 696.5 L1903.4 694.4 L1889.5 695.1 L1881.1 689.5 L1872.8 684.6 L1861.6 681.9 L1851.8 679.8 L1842.1 683.3 L1830.9 681.9 L1822.5 688.1 L1814.2 690.9 L1805.8 689.5 L1805.8 693.7 L1810.0 700.7 L1817.0 707.0 L1825.3 714.6 L1819.7 711.8 L1810.0 704.9 L1805.8 709.0 L1811.4 716.0 L1814.2 721.6 L1810.0 721.6 L1804.4 714.6 L1797.4 712.5 L1800.0 719.0 L1803.7 725.1 L1798.0 722.0 L1793.2 716.0 L1789.1 710.5 L1782.1 706.3 L1776.5 701.4 L1779.3 695.1 L1775.1 697.2 L1769.5 702.8 L1767.4 714.6 L1768.8 721.6 L1773.7 728.6 L1777.9 737.0 L1780.0 743.9 L1786.3 750.9 L1791.1 757.9 L1784.9 759.3 L1783.5 766.2 L1789.0 769.0 L1786.0 774.0 L1792.0 778.0 L1800.0 785.0 L1807.4 793.0 L1816.0 810.2 L1817.1 820.9 L1810.0 815.0 L1803.1 810.2 L1794.5 805.9 L1786.0 806.0 L1779.5 808.0 L1781.7 812.3 L1790.2 823.1 L1796.7 831.7 L1788.1 836.0 L1780.0 832.0 L1775.2 829.5 L1779.5 840.2 L1782.0 852.0 L1781.7 866.0 L1777.4 853.1 L1768.8 851.0 L1766.6 859.6 L1762.3 866.0 L1755.9 853.1 L1745.2 848.8 L1743.0 859.6 L1734.4 846.7 L1738.7 836.0 L1730.2 823.1 L1719.4 812.3 L1725.9 801.6 L1725.9 797.3 L1721.6 790.9 L1710.8 780.2 L1703.3 778.0 L1710.8 773.7 L1708.7 765.1 L1698.0 754.4 L1689.4 741.5 L1682.9 726.5 L1672.2 715.8 L1660.4 705.0 L1661.5 693.0 L1660.6 688.7 L1662.4 675.9 L1666.0 665.0 L1664.2 654.0 L1662.4 641.3 L1655.1 634.9 L1644.1 624.8 L1631.4 613.9 L1618.6 604.8 L1607.7 597.5 L1595.2 582.2 L1583.2 579.2 L1574.2 574.7 L1565.2 568.7 L1557.7 564.9 L1550.1 561.9 L1545.6 555.2 L1538.1 549.2 L1530.6 540.1 L1523.1 528.1 L1517.8 520.6 L1516.3 510.1 L1516.3 499.6 L1511.8 493.6 L1506.6 489.8 L1502.1 483.8 L1496.8 482.3 L1492.3 489.1 L1488.5 498.1 L1482.5 505.6 L1476.5 498.1 L1471.3 487.6 L1469.3 477.0 L1471.5 470.8 L1473.0 464.6 L1466.0 460.0 L1400.0 455.0 L1300.0 500.0 L1272.8 553.7 L1266.9 554.3 L1255.9 564.3 L1244.9 575.4 L1241.2 580.9 L1230.2 584.5 L1215.5 585.4 L1204.5 579.9 L1193.5 575.4 L1182.5 571.7 L1173.3 565.3 L1164.2 568.0 L1153.2 564.3 L1142.1 569.9 L1131.1 579.0 L1121.0 585.4 L1122.0 601.0 L1122.0 612.0 L1130.2 620.3 L1125.6 626.7 L1127.5 637.7 L1118.3 646.9 L1105.4 654.3 L1094.4 661.6 L1079.8 668.9 L1065.1 672.6 L1052.2 679.9 L1044.9 687.3 L1048.6 691.9 L1041.2 696.5 L1035.7 705.6 L1028.4 717.0 L1027.2 716.3 L1019.0 728.5 L1010.9 744.9 L1014.9 761.2 L1027.2 776.5 L1017.0 785.6 L1004.7 793.8 L998.6 810.1 L996.6 824.4 L986.4 826.4 L974.2 828.5 L966.0 835.6 L966.0 572.0 L967.8 569.9 L973.3 557.0 L977.0 546.0 L978.8 531.0 L980.7 510.8 L982.5 492.4 L984.0 474.0 L989.0 472.5 L996.0 480.0 L1000.5 494.0 L998.0 480.0 L991.0 470.0 L984.5 466.0 L982.5 461.0 L986.0 450.0 L983.4 439.0 L975.0 433.0 L966.0 429.0 Z M1029.2 887.0 L1051.6 873.3 L1072.0 869.2 L1096.5 866.2 L1118.9 859.0 L1135.2 860.0 L1149.5 854.6 L1169.9 855.0 L1186.2 858.0 L1194.4 863.1 L1206.0 861.0 L1217.2 855.3 L1234.3 847.8 L1247.2 853.2 L1262.3 847.8 L1277.3 855.3 L1294.5 855.3 L1311.6 852.1 L1322.4 843.5 L1333.1 839.2 L1346.0 836.0 L1356.7 840.3 L1359.9 853.2 L1363.2 861.7 L1373.9 855.3 L1386.8 848.9 L1387.8 857.5 L1380.3 870.3 L1371.7 881.0 L1369.6 887.0 Z M1333.0 592.9 L1334.8 599.3 L1333.0 603.0 L1335.7 608.4 L1338.4 621.2 L1336.6 632.1 L1333.0 643.1 L1330.2 654.0 L1325.7 662.2 L1320.2 657.7 L1314.7 652.2 L1312.9 644.9 L1309.2 639.4 L1310.2 634.0 L1306.5 628.5 L1304.7 621.2 L1309.2 613.9 L1314.7 608.4 L1322.0 603.9 L1330.2 602.0 L1331.1 595.7 Z M1101.6 740.8 L1118.9 727.5 L1134.2 735.7 L1129.1 748.9 L1122.0 753.4 L1112.8 744.9 L1104.7 741.8 Z M1146.5 722.0 L1155.6 720.4 L1163.8 728.5 L1155.6 726.5 Z M1062.0 768.5 L1067.0 763.5 L1073.0 761.0 L1073.5 765.0 L1069.0 769.0 L1064.0 771.5 Z M1788.1 765.1 L1796.0 768.0 L1806.0 778.0 L1815.0 787.0 L1822.4 795.2 L1819.0 797.0 L1810.0 790.0 L1800.0 781.0 L1792.0 774.0 Z M1908.0 696.5 L1908.0 740.0 L1896.5 742.5 L1883.2 743.9 L1883.9 731.4 L1892.3 718.8 L1899.0 712.0 L1890.9 711.8 L1899.0 704.0 L1908.0 700.0 Z M1908.0 750.0 L1900.6 753.7 L1904.0 762.0 L1897.0 771.0 L1903.0 778.0 L1908.0 780.0 Z M1908.0 790.0 L1901.0 796.0 L1895.0 806.0 L1902.0 808.0 L1908.0 806.0 Z M1833.0 695.0 L1836.5 689.5 L1841.0 695.0 Z M1851.0 724.0 L1863.0 721.5 L1858.5 732.0 Z M1866.5 701.0 L1869.5 701.0 L1868.0 703.5 Z M1877.0 754.5 L1885.0 752.0 L1893.0 752.0 L1900.0 760.0 L1896.0 765.0 L1888.0 765.0 L1882.0 760.0 Z M1876.5 784.0 L1881.0 782.0 L1884.5 790.0 L1883.0 799.0 L1878.5 797.0 L1878.0 790.0 Z M1672.5 733.0 L1676.0 733.0 L1681.0 745.0 L1679.0 746.5 L1675.0 741.0 Z M1697.0 793.0 L1702.0 788.5 L1706.0 792.0 L1709.0 803.0 L1705.0 806.0 L1699.0 800.0 Z M1704.0 813.0 L1708.0 812.5 L1713.5 819.0 L1711.5 821.5 L1706.0 818.0 Z M1829.0 804.0 L1836.0 802.0 L1838.0 808.0 L1831.0 809.0 Z M1841.0 812.0 L1846.0 815.0 L1850.0 822.0 L1846.0 822.0 L1841.0 817.0 Z M1830.0 824.0 L1834.0 823.0 L1835.0 829.0 L1831.0 829.0 Z M1848.0 834.0 L1855.0 831.0 L1861.0 834.0 L1857.0 842.0 L1851.0 841.0 Z M1824.0 838.0 L1828.0 837.0 L1829.0 842.0 L1825.0 843.0 Z M1838.0 850.0 L1843.0 848.0 L1845.0 853.0 L1840.0 855.0 Z M1863.0 848.0 L1871.0 844.0 L1876.0 847.0 L1868.0 853.0 Z M1820.0 857.0 L1825.0 856.0 L1826.0 861.0 L1821.0 862.0 Z M1884.0 812.0 L1893.0 808.0 L1899.0 811.0 L1895.0 816.0 L1887.0 816.0 Z M1899.0 824.0 L1905.0 822.0 L1908.0 826.0 L1908.0 832.0 L1902.0 830.0 Z M1853.0 862.0 L1860.0 860.0 L1863.0 865.0 L1856.0 867.0 Z M1782.0 884.0 L1786.0 880.0 L1789.0 887.0 L1782.0 887.0 Z M1498.0 501.0 L1499.8 501.0 L1500.5 513.0 L1498.6 513.0 Z M1505.0 490.0 L1509.0 489.0 L1511.0 497.0 L1507.0 498.0 Z M1538.0 558.0 L1548.0 562.0 L1547.0 563.5 L1537.0 559.5 Z M1552.0 566.0 L1564.0 571.0 L1563.0 572.5 L1551.0 567.5 Z M1563.0 575.0 L1574.0 579.5 L1573.0 581.0 L1562.0 576.5 Z" fill="#f1f3e8" stroke="#f1f3e8" stroke-width="1.2" stroke-linejoin="round"/><g clip-path="url(#lc)"><g filter="url(#gn)"><ellipse cx="1105" cy="505" rx="75" ry="55" fill="#000" opacity="0.66"/><ellipse cx="1150" cy="420" rx="50" ry="40" fill="#000" opacity="0.5"/><ellipse cx="1185" cy="395" rx="35" ry="30" fill="#000" opacity="0.55"/><ellipse cx="1010" cy="400" rx="30" ry="20" fill="#000" opacity="0.35"/><ellipse cx="1010" cy="520" rx="28" ry="40" fill="#000" opacity="0.8"/><ellipse cx="1040" cy="610" rx="75" ry="35" fill="#000" opacity="0.8"/><ellipse cx="1000" cy="700" rx="40" ry="60" fill="#000" opacity="0.45"/><ellipse cx="1260" cy="410" rx="80" ry="40" fill="#000" opacity="0.85"/><ellipse cx="1400" cy="385" rx="120" ry="25" fill="#000" opacity="0.85"/><ellipse cx="1210" cy="500" rx="40" ry="60" fill="#000" opacity="0.7"/><ellipse cx="1180" cy="560" rx="45" ry="25" fill="#000" opacity="0.6"/><ellipse cx="1540" cy="440" rx="75" ry="50" fill="#000" opacity="0.95"/><ellipse cx="1580" cy="540" rx="70" ry="55" fill="#000" opacity="0.9"/><ellipse cx="1640" cy="480" rx="40" ry="40" fill="#000" opacity="0.5"/><ellipse cx="1700" cy="600" rx="50" ry="70" fill="#000" opacity="0.85"/><ellipse cx="1760" cy="560" rx="30" ry="50" fill="#000" opacity="0.6"/><ellipse cx="1720" cy="700" rx="30" ry="40" fill="#000" opacity="0.5"/><ellipse cx="1790" cy="465" rx="55" ry="36" fill="#000" opacity="0.95"/><ellipse cx="1865" cy="458" rx="50" ry="38" fill="#000" opacity="0.9"/><ellipse cx="1885" cy="400" rx="38" ry="30" fill="#000" opacity="0.85"/><ellipse cx="1775" cy="398" rx="22" ry="18" fill="#000" opacity="0.5"/><ellipse cx="1752" cy="530" rx="24" ry="30" fill="#000" opacity="0.8"/><ellipse cx="1850" cy="613" rx="55" ry="13" fill="#000" opacity="0.85"/><ellipse cx="1825" cy="662" rx="35" ry="18" fill="#000" opacity="0.8"/><ellipse cx="1780" cy="650" rx="25" ry="30" fill="#000" opacity="0.6"/><ellipse cx="1740" cy="760" rx="30" ry="25" fill="#000" opacity="0.55"/><ellipse cx="1760" cy="830" rx="25" ry="25" fill="#000" opacity="0.5"/><ellipse cx="1700" cy="730" rx="20" ry="30" fill="#000" opacity="0.5"/><ellipse cx="1150" cy="875" rx="90" ry="14" fill="#000" opacity="0.6"/><ellipse cx="1300" cy="870" rx="60" ry="15" fill="#000" opacity="0.5"/><ellipse cx="1320" cy="630" rx="10" ry="25" fill="#000" opacity="0.6"/></g></g><path d="M1593.7 414.4 L1596.0 411.0 L1618.0 401.0 L1620.3 402.6 L1598.0 414.8 Z" fill="#badcf6"/><path d="M1658.5 620.5 L1661.5 621.0 L1663.0 628.5 L1660.0 627.0 Z" fill="#badcf6"/><path d="M1726.0 798.5 L1743.0 795.0 L1760.0 798.5 L1777.0 806.0 L1786.0 803.0 L1777.0 809.0 L1760.0 802.5 L1743.0 798.5 L1727.0 802.0 Z" fill="#badcf6"/><path d="M1784.0 762.0 L1789.0 764.0 L1788.0 770.0 L1784.0 768.0 Z" fill="#badcf6"/><path d="M1225.0 438.0 L1232.0 432.0 L1240.0 428.0 L1246.0 425.5 L1248.0 427.5 L1241.0 431.5 L1234.0 435.5 L1227.0 440.0 Z" fill="#badcf6"/><path d="M1330.0 375.0 L1341.0 375.0 L1340.0 378.5 L1333.0 378.0 Z" fill="#badcf6"/><path d="M1305.0 399.0 L1309.0 400.0 L1308.5 402.0 L1304.5 401.0 Z" fill="#badcf6"/><path d="M966.0 577.2 L975.0 578.0 L974.0 588.0 L979.8 585.4 L997.0 593.7 L1002.7 599.2 L1010.0 596.5 L1019.0 603.8 L1043.0 603.8 L1045.0 595.5 L1067.0 602.0 L1069.7 614.8 L1078.8 612.0 L1087.0 618.5 L1096.3 614.8 L1105.4 619.4 L1118.3 613.0 L1125.6 614.8" fill="none" stroke="#dccbcd" stroke-width="0.9"/><path d="M1245.0 458.0 L1238.0 452.0 L1236.0 441.0 L1226.0 440.0 L1218.0 444.0 L1221.0 436.0 L1228.0 428.0 L1238.0 418.0 L1249.0 405.0 L1252.0 392.0 L1262.0 383.0 L1275.0 378.0 L1285.0 375.0" fill="none" stroke="#dccbcd" stroke-width="0.9"/><path d="M1285.0 375.0 L1300.0 377.0 L1316.0 376.0 L1333.0 378.0 L1340.0 384.0 L1336.0 394.0 L1340.0 400.0 L1352.0 398.0 L1362.0 403.0 L1367.0 409.0" fill="none" stroke="#dccbcd" stroke-width="0.9"/><path d="M1340.0 384.0 L1352.0 380.0 L1366.0 386.0 L1384.0 380.0 L1400.0 375.0" fill="none" stroke="#dccbcd" stroke-width="0.9"/><path d="M1475.0 424.5 L1490.0 428.0 L1503.0 432.0 L1520.0 420.0 L1545.0 418.0 L1553.0 410.0 L1566.0 409.0" fill="none" stroke="#dccbcd" stroke-width="0.9"/><path d="M1566.0 409.0 L1560.0 395.0 L1556.0 383.0 L1560.0 375.0" fill="none" stroke="#dccbcd" stroke-width="0.9"/><path d="M1503.0 432.0 L1500.0 440.0 L1493.0 444.0" fill="none" stroke="#dccbcd" stroke-width="0.9"/><path d="M1566.0 409.0 L1572.0 420.0 L1592.0 428.0 L1607.0 436.0 L1622.0 444.0 L1632.0 453.0 L1644.0 452.0" fill="none" stroke="#dccbcd" stroke-width="0.9"/><path d="M1480.0 470.0 L1490.0 472.0 L1500.0 468.0 L1513.0 474.0 L1523.0 470.0 L1528.0 463.0 L1540.0 466.0 L1552.0 452.0 L1560.0 440.0 L1572.0 432.0 L1592.0 428.0" fill="none" stroke="#dccbcd" stroke-width="0.9"/><path d="M1644.0 452.0 L1650.0 440.0 L1668.0 442.0 L1690.0 444.0 L1705.0 440.0 L1722.0 430.0 L1726.0 418.0 L1738.0 406.0 L1748.0 388.0 L1750.0 375.0" fill="none" stroke="#dccbcd" stroke-width="0.9"/><path d="M1690.0 444.0 L1705.0 460.0 L1709.0 474.0 L1722.0 484.0 L1732.0 492.0 L1728.0 502.0 L1738.0 512.0 L1750.0 516.0 L1760.0 512.0 L1768.0 520.0 L1774.0 530.0" fill="none" stroke="#dccbcd" stroke-width="0.9"/><path d="M1644.0 452.0 L1647.0 463.0 L1652.0 478.0 L1664.0 486.0 L1654.0 496.0 L1652.0 508.0 L1660.0 516.0 L1654.0 530.0 L1664.0 540.0" fill="none" stroke="#dccbcd" stroke-width="0.9"/><path d="M1541.0 488.0 L1548.0 478.0 L1560.0 482.0 L1572.0 476.0 L1590.0 478.0 L1612.0 486.0 L1634.0 490.0 L1652.0 492.0" fill="none" stroke="#dccbcd" stroke-width="0.9"/><path d="M1541.0 488.0 L1540.0 500.0 L1546.0 516.0 L1556.0 530.0 L1566.0 544.0 L1580.0 558.0 L1594.0 570.0 L1604.0 582.0" fill="none" stroke="#dccbcd" stroke-width="0.9"/><path d="M1774.0 530.0 L1780.0 545.0 L1778.0 556.0 L1800.0 558.0 L1830.0 560.0 L1870.0 556.0 L1895.0 545.0 L1908.0 540.0" fill="none" stroke="#dccbcd" stroke-width="0.9"/><path d="M1762.0 545.0 L1766.0 560.0 L1774.0 574.0 L1780.0 590.0 L1766.0 598.0 L1762.0 612.0 L1768.0 620.0" fill="none" stroke="#dccbcd" stroke-width="0.9"/><path d="M1640.0 560.0 L1650.0 572.0 L1662.0 580.0 L1672.0 590.0 L1684.0 598.0 L1698.0 592.0 L1710.0 600.0" fill="none" stroke="#dccbcd" stroke-width="0.9"/><path d="M1700.0 620.0 L1710.0 630.0 L1704.0 640.0 L1716.0 626.0 L1736.0 622.0 L1762.0 620.0 L1770.0 632.0 L1782.0 644.0" fill="none" stroke="#dccbcd" stroke-width="0.9"/><path d="M1782.0 644.0 L1800.0 654.0 L1822.0 654.0 L1838.0 662.0 L1862.0 666.0 L1886.0 660.0 L1892.0 646.0 L1908.0 636.0" fill="none" stroke="#dccbcd" stroke-width="0.9"/><path d="M1662.0 641.0 L1672.0 652.0 L1680.0 668.0 L1690.0 684.0 L1700.0 690.0 L1712.0 686.0 L1740.0 680.0 L1760.0 668.0 L1782.0 660.0 L1782.0 644.0" fill="none" stroke="#dccbcd" stroke-width="0.9"/><path d="M1661.0 705.0 L1676.0 716.0 L1690.0 712.0 L1696.0 722.0 L1690.0 734.0 L1684.0 736.0" fill="none" stroke="#dccbcd" stroke-width="0.9"/><path d="M1307.3 853.2 L1304.0 862.0 L1299.0 870.0 L1300.0 878.0 L1296.6 887.0" fill="none" stroke="#dccbcd" stroke-width="0.9"/><g opacity="0.85"><text stroke-linejoin="round" x="1049.04" y="426.00" font-size="16.6" fill="#ffffff" textLength="70.07" lengthAdjust="spacingAndGlyphs" stroke="#ffffff" stroke-width="3.2">FRANCE</text><text stroke-linejoin="round" x="1234.33" y="417.60" font-size="16.6" fill="#ffffff" textLength="119.86" lengthAdjust="spacingAndGlyphs" stroke="#ffffff" stroke-width="3.2">SWITZERLAND</text><text stroke-linejoin="round" x="1452.50" y="377.80" font-size="16.6" fill="#ffffff" textLength="73.30" lengthAdjust="spacingAndGlyphs" stroke="#ffffff" stroke-width="3.2">AUSTRIA</text><text stroke-linejoin="round" x="1624.96" y="397.00" font-size="16.6" fill="#ffffff" textLength="83.55" lengthAdjust="spacingAndGlyphs" stroke="#ffffff" stroke-width="3.2">HUNGARY</text><text stroke-linejoin="round" x="1410.81" y="464.00" font-size="16.6" fill="#ffffff" textLength="86.55" lengthAdjust="spacingAndGlyphs" stroke="#ffffff" stroke-width="3.2">SLOVENIA</text><text stroke-linejoin="round" x="1547.06" y="476.00" font-size="16.6" fill="#ffffff" textLength="73.45" lengthAdjust="spacingAndGlyphs" stroke="#ffffff" stroke-width="3.2">CROATIA</text><text stroke-linejoin="round" x="1798.65" y="455.70" font-size="16.6" fill="#ffffff" textLength="79.00" lengthAdjust="spacingAndGlyphs" stroke="#ffffff" stroke-width="3.2">ROMANIA</text><text stroke-linejoin="round" x="1486.89" y="523.60" font-size="16.6" fill="#ffffff" textLength="106.57" lengthAdjust="spacingAndGlyphs" stroke="#ffffff" stroke-width="3.2">BOSNIA AND</text><text stroke-linejoin="round" x="1478.66" y="542.30" font-size="16.6" fill="#ffffff" textLength="122.33" lengthAdjust="spacingAndGlyphs" stroke="#ffffff" stroke-width="3.2">HERZEGOVINA</text><text stroke-linejoin="round" x="1670.03" y="541.00" font-size="16.6" fill="#ffffff" textLength="61.24" lengthAdjust="spacingAndGlyphs" stroke="#ffffff" stroke-width="3.2">SERBIA</text><text stroke-linejoin="round" x="1542.46" y="594.70" font-size="16.6" fill="#ffffff" textLength="122.15" lengthAdjust="spacingAndGlyphs" stroke="#ffffff" stroke-width="3.2">MONTENEGRO</text><text stroke-linejoin="round" x="1675.03" y="612.10" font-size="16.6" fill="#ffffff" textLength="74.13" lengthAdjust="spacingAndGlyphs" stroke="#ffffff" stroke-width="3.2">KOSOVO</text><text stroke-linejoin="round" x="1819.99" y="612.10" font-size="16.6" fill="#ffffff" textLength="89.36" lengthAdjust="spacingAndGlyphs" stroke="#ffffff" stroke-width="3.2">BULGARIA</text><text stroke-linejoin="round" x="1656.45" y="656.20" font-size="16.6" fill="#ffffff" textLength="166.37" lengthAdjust="spacingAndGlyphs" stroke="#ffffff" stroke-width="3.2">NORTH MACEDONIA</text><text stroke-linejoin="round" x="1647.80" y="683.20" font-size="16.6" fill="#ffffff" textLength="72.90" lengthAdjust="spacingAndGlyphs" stroke="#ffffff" stroke-width="3.2">ALBANIA</text><text stroke-linejoin="round" x="1712.76" y="770.50" font-size="16.6" fill="#ffffff" textLength="71.20" lengthAdjust="spacingAndGlyphs" stroke="#ffffff" stroke-width="3.2">GREECE</text></g><g><text x="1049.04" y="426.00" font-size="16.6" fill="#a98da0" textLength="70.07" lengthAdjust="spacingAndGlyphs" stroke="#a98da0" stroke-width="0.85">FRANCE</text><text x="1234.33" y="417.60" font-size="16.6" fill="#a98da0" textLength="119.86" lengthAdjust="spacingAndGlyphs" stroke="#a98da0" stroke-width="0.85">SWITZERLAND</text><text x="1452.50" y="377.80" font-size="16.6" fill="#a98da0" textLength="73.30" lengthAdjust="spacingAndGlyphs" stroke="#a98da0" stroke-width="0.85">AUSTRIA</text><text x="1624.96" y="397.00" font-size="16.6" fill="#a98da0" textLength="83.55" lengthAdjust="spacingAndGlyphs" stroke="#a98da0" stroke-width="0.85">HUNGARY</text><text x="1410.81" y="464.00" font-size="16.6" fill="#a98da0" textLength="86.55" lengthAdjust="spacingAndGlyphs" stroke="#a98da0" stroke-width="0.85">SLOVENIA</text><text x="1547.06" y="476.00" font-size="16.6" fill="#a98da0" textLength="73.45" lengthAdjust="spacingAndGlyphs" stroke="#a98da0" stroke-width="0.85">CROATIA</text><text x="1798.65" y="455.70" font-size="16.6" fill="#a98da0" textLength="79.00" lengthAdjust="spacingAndGlyphs" stroke="#a98da0" stroke-width="0.85">ROMANIA</text><text x="1486.89" y="523.60" font-size="16.6" fill="#a98da0" textLength="106.57" lengthAdjust="spacingAndGlyphs" stroke="#a98da0" stroke-width="0.85">BOSNIA AND</text><text x="1478.66" y="542.30" font-size="16.6" fill="#a98da0" textLength="122.33" lengthAdjust="spacingAndGlyphs" stroke="#a98da0" stroke-width="0.85">HERZEGOVINA</text><text x="1670.03" y="541.00" font-size="16.6" fill="#a98da0" textLength="61.24" lengthAdjust="spacingAndGlyphs" stroke="#a98da0" stroke-width="0.85">SERBIA</text><text x="1542.46" y="594.70" font-size="16.6" fill="#a98da0" textLength="122.15" lengthAdjust="spacingAndGlyphs" stroke="#a98da0" stroke-width="0.85">MONTENEGRO</text><text x="1675.03" y="612.10" font-size="16.6" fill="#a98da0" textLength="74.13" lengthAdjust="spacingAndGlyphs" stroke="#a98da0" stroke-width="0.85">KOSOVO</text><text x="1819.99" y="612.10" font-size="16.6" fill="#a98da0" textLength="89.36" lengthAdjust="spacingAndGlyphs" stroke="#a98da0" stroke-width="0.85">BULGARIA</text><text x="1656.45" y="656.20" font-size="16.6" fill="#a98da0" textLength="166.37" lengthAdjust="spacingAndGlyphs" stroke="#a98da0" stroke-width="0.85">NORTH MACEDONIA</text><text x="1647.80" y="683.20" font-size="16.6" fill="#a98da0" textLength="72.90" lengthAdjust="spacingAndGlyphs" stroke="#a98da0" stroke-width="0.85">ALBANIA</text><text x="1712.76" y="770.50" font-size="16.6" fill="#a98da0" textLength="71.20" lengthAdjust="spacingAndGlyphs" stroke="#a98da0" stroke-width="0.85">GREECE</text></g><path d="M1272.8 553.7 L1268.3 550.7 L1270.5 543.2 L1273.5 538.7 L1266.0 535.6 L1255.5 531.1 L1248.8 525.1 L1246.5 519.1 L1250.3 513.9 L1253.3 508.6 L1250.3 504.1 L1245.0 499.6 L1241.3 496.6 L1240.5 492.1 L1243.5 489.8 L1250.3 489.1 L1256.3 480.1 L1251.8 474.1 L1252.5 468.1 L1247.3 463.6 L1245.8 458.3 L1251.0 455.3 L1260.0 453.8 L1271.3 450.0 L1279.6 451.5 L1287.1 447.0 L1288.6 436.5 L1296.1 429.0 L1301.3 428.3 L1302.1 436.5 L1306.6 444.0 L1314.1 450.0 L1318.6 456.0 L1317.9 450.0 L1321.6 442.5 L1326.1 433.5 L1327.6 427.5 L1332.1 425.3 L1336.6 430.5 L1344.1 433.5 L1351.6 432.0 L1352.4 423.0 L1356.0 421.5 L1360.5 419.5 L1365.8 418.6 L1364.9 412.5 L1367.5 408.7 L1376.3 409.9 L1383.3 410.8 L1388.5 405.5 L1400.8 401.7 L1414.8 399.4 L1425.3 397.6 L1424.4 403.8 L1428.8 412.5 L1437.5 416.9 L1451.5 419.5 L1465.5 422.1 L1475.1 424.8 L1474.3 429.1 L1466.4 434.4 L1464.3 436.5 L1465.8 439.5 L1472.5 440.9 L1473.0 446.5 L1467.7 449.0 L1467.7 464.3 L1456.8 464.1 L1448.0 470.3 L1435.8 476.4 L1427.0 484.3 L1430.5 491.3 L1435.8 498.3 L1434.0 505.3 L1428.8 508.8 L1427.0 517.5 L1431.4 524.5 L1430.5 531.5 L1435.8 538.5 L1444.5 545.5 L1455.0 552.5 L1461.7 556.3 L1472.0 562.3 L1477.2 574.3 L1480.0 581.1 L1482.3 589.8 L1485.8 601.8 L1492.6 610.4 L1500.0 619.4 L1503.7 621.0 L1512.8 631.0 L1523.8 636.5 L1540.2 635.6 L1553.9 636.5 L1558.1 642.0 L1554.8 648.4 L1548.4 654.8 L1558.4 662.1 L1571.2 669.4 L1585.8 674.8 L1598.6 683.9 L1609.5 690.3 L1620.5 692.2 L1624.1 699.5 L1631.4 706.8 L1635.1 715.9 L1631.4 723.2 L1629.6 731.4 L1622.3 728.6 L1615.9 723.2 L1614.1 714.0 L1607.7 708.6 L1596.7 706.7 L1589.4 703.1 L1582.1 702.2 L1576.7 710.4 L1572.1 719.5 L1569.4 730.5 L1572.4 736.2 L1581.0 739.4 L1589.6 750.1 L1591.7 763.0 L1585.3 768.4 L1574.6 771.6 L1570.3 778.0 L1570.3 786.6 L1566.0 793.0 L1557.4 801.6 L1554.2 810.2 L1548.8 811.3 L1540.2 811.3 L1538.1 803.8 L1541.3 795.2 L1546.7 790.9 L1544.5 782.3 L1546.7 776.9 L1556.3 773.7 L1553.1 763.0 L1548.8 750.1 L1544.5 739.4 L1542.9 730.5 L1538.4 725.0 L1529.3 723.2 L1522.0 717.7 L1514.7 712.2 L1515.6 704.9 L1512.8 696.7 L1505.5 692.2 L1498.2 690.3 L1494.4 691.1 L1485.8 685.9 L1480.6 679.1 L1475.5 672.2 L1468.6 667.9 L1458.3 667.0 L1451.4 667.9 L1442.9 660.2 L1434.3 653.3 L1425.7 643.0 L1417.1 636.1 L1410.2 627.6 L1403.4 618.1 L1394.8 617.3 L1387.9 615.5 L1386.2 607.0 L1377.6 600.1 L1375.9 595.8 L1370.8 591.5 L1369.0 586.4 L1367.3 574.3 L1363.9 565.8 L1361.3 557.2 L1358.8 547.3 L1353.5 540.3 L1350.1 542.4 L1344.1 540.2 L1333.6 534.2 L1323.1 528.1 L1314.1 525.1 L1306.6 527.4 L1299.1 534.2 L1294.6 540.2 L1291.6 547.7 L1281.0 552.2 Z M1325.6 666.3 L1334.6 667.8 L1340.6 676.1 L1342.9 685.1 L1345.1 694.1 L1347.4 698.6 L1344.4 706.1 L1343.6 718.1 L1342.1 730.1 L1340.6 745.2 L1339.9 755.7 L1336.1 760.9 L1330.1 757.9 L1324.1 756.4 L1319.6 764.7 L1313.6 770.7 L1306.1 769.2 L1299.3 767.0 L1296.3 762.4 L1292.5 757.9 L1297.8 754.2 L1298.5 743.7 L1300.8 733.2 L1297.8 725.6 L1298.5 719.6 L1301.6 715.1 L1299.3 704.6 L1294.0 697.8 L1290.3 695.6 L1290.3 688.1 L1291.8 679.8 L1294.8 680.6 L1300.0 685.1 L1307.6 681.3 L1315.1 675.3 L1321.1 670.0 Z M1431.8 812.4 L1434.0 803.8 L1441.5 799.5 L1447.9 802.7 L1454.3 798.4 L1461.9 797.3 L1469.4 801.6 L1482.3 805.9 L1495.1 804.9 L1508.0 799.5 L1520.9 799.5 L1531.6 795.2 L1537.0 795.2 L1533.8 805.9 L1527.3 816.7 L1525.2 827.4 L1527.3 838.1 L1528.4 846.7 L1523.0 855.3 L1522.0 863.9 L1514.5 860.7 L1505.9 861.7 L1499.4 859.6 L1493.0 848.9 L1482.3 844.6 L1471.5 840.3 L1462.9 833.8 L1452.2 827.4 L1441.5 825.2 L1435.0 819.9 Z" fill="#8b86c8" stroke="#77768a" stroke-width="1.2" stroke-linejoin="round"/><path d="M1471.5 450.5 L1479.5 465 L1476.5 466.5" fill="none" stroke="#77768a" stroke-width="1" opacity="0.8"/><ellipse cx="1357.5" cy="600.2" rx="4.6" ry="2.2" fill="#8b86c8" stroke="#77768a" stroke-width="1"/><ellipse cx="1296.3" cy="674.6" rx="1.6" ry="2.4" fill="#8b86c8" stroke="#77768a" stroke-width="1"/><ellipse cx="1417.9" cy="857.5" rx="3" ry="2" fill="#8b86c8" stroke="#77768a" stroke-width="1"/><ellipse cx="1515.5" cy="786.6" rx="1.8" ry="1.6" fill="#8b86c8" stroke="#77768a" stroke-width="1"/><ellipse cx="1481.2" cy="691" rx="2" ry="1.6" fill="#8b86c8" stroke="#77768a" stroke-width="1"/><ellipse cx="1490.2" cy="690.6" rx="1.6" ry="1.4" fill="#8b86c8" stroke="#77768a" stroke-width="1"/><ellipse cx="1381.2" cy="619.5" rx="1.2" ry="1.6" fill="#8b86c8" stroke="#77768a" stroke-width="1"/><ellipse cx="1426.8" cy="555" rx="1.2" ry="1.2" fill="#8b86c8" stroke="#77768a" stroke-width="1"/><ellipse cx="1432.4" cy="546.8" rx="1.2" ry="1.2" fill="#8b86c8" stroke="#77768a" stroke-width="1"/><path d="M1446.5 596.5 L1452.8 577.0 A20.5 20.5 0 1 1 1426.0 596.5 Z" fill="#b4485c"/><path d="M1446.5 596.5 L1426.0 596.5 A20.5 20.5 0 0 1 1436.9 578.4 Z" fill="#7fb3a0"/><path d="M1446.5 596.5 L1436.9 578.4 A20.5 20.5 0 0 1 1447.2 576.0 Z" fill="#17cfcf"/><path d="M1446.5 596.5 L1447.2 576.0 A20.5 20.5 0 0 1 1452.8 577.0 Z" fill="#958fd6"/><circle cx="1310.6" cy="447.0" r="4.5" fill="#efe6e3" stroke="#77777f" stroke-width="1.1" stroke-opacity="0.8"/><circle cx="1292.8" cy="486.5" r="4.5" fill="#d0cca6" stroke="#77777f" stroke-width="1.1" stroke-opacity="0.8"/><circle cx="1333.6" cy="481.9" r="4.5" fill="#d0cca6" stroke="#77777f" stroke-width="1.1" stroke-opacity="0.8"/><circle cx="1342.6" cy="487.6" r="4.5" fill="#d0cca6" stroke="#77777f" stroke-width="1.1" stroke-opacity="0.8"/><circle cx="1275.8" cy="494.3" r="4.5" fill="#d0cca6" stroke="#77777f" stroke-width="1.1" stroke-opacity="0.8"/><circle cx="1314.9" cy="492.8" r="4.5" fill="#d0cca6" stroke="#77777f" stroke-width="1.1" stroke-opacity="0.8"/><circle cx="1336.3" cy="495.8" r="4.5" fill="#d0cca6" stroke="#77777f" stroke-width="1.1" stroke-opacity="0.8"/><circle cx="1266.8" cy="532.6" r="4.5" fill="#efe6e3" stroke="#77777f" stroke-width="1.1" stroke-opacity="0.8"/><circle cx="1300.6" cy="531.1" r="4.5" fill="#efe6e3" stroke="#77777f" stroke-width="1.1" stroke-opacity="0.8"/><circle cx="1364.4" cy="448.4" r="4.5" fill="#efe6e3" stroke="#77777f" stroke-width="1.1" stroke-opacity="0.8"/><circle cx="1385.0" cy="447.2" r="4.5" fill="#efe6e3" stroke="#77777f" stroke-width="1.1" stroke-opacity="0.8"/><circle cx="1428.8" cy="451.9" r="4.5" fill="#efe6e3" stroke="#77777f" stroke-width="1.1" stroke-opacity="0.8"/><circle cx="1461.1" cy="459.4" r="4.5" fill="#d0cca6" stroke="#77777f" stroke-width="1.1" stroke-opacity="0.8"/><circle cx="1426.1" cy="476.9" r="4.5" fill="#d0cca6" stroke="#77777f" stroke-width="1.1" stroke-opacity="0.8"/><circle cx="1389.9" cy="495.3" r="4.5" fill="#d0cca6" stroke="#77777f" stroke-width="1.1" stroke-opacity="0.8"/><circle cx="1395.2" cy="498.3" r="4.5" fill="#d0cca6" stroke="#77777f" stroke-width="1.1" stroke-opacity="0.8"/><circle cx="1426.1" cy="495.8" r="4.5" fill="#d0cca6" stroke="#77777f" stroke-width="1.1" stroke-opacity="0.8"/><circle cx="1427.9" cy="522.4" r="4.5" fill="#d0cca6" stroke="#77777f" stroke-width="1.1" stroke-opacity="0.8"/><circle cx="1403.9" cy="618.1" r="4.5" fill="#d0cca6" stroke="#77777f" stroke-width="1.1" stroke-opacity="0.8"/><circle cx="1411.4" cy="629.3" r="4.5" fill="#d0cca6" stroke="#77777f" stroke-width="1.1" stroke-opacity="0.8"/><circle cx="1502.9" cy="632.7" r="4.5" fill="#d0cca6" stroke="#77777f" stroke-width="1.1" stroke-opacity="0.8"/><circle cx="1432.9" cy="643.3" r="4.5" fill="#efe6e3" stroke="#77777f" stroke-width="1.1" stroke-opacity="0.8"/><circle cx="1487.5" cy="661.0" r="4.5" fill="#efe6e3" stroke="#77777f" stroke-width="1.1" stroke-opacity="0.8"/><circle cx="1503.7" cy="632.3" r="4.5" fill="#d0cca6" stroke="#77777f" stroke-width="1.1" stroke-opacity="0.8"/><circle cx="1557.5" cy="735.0" r="4.5" fill="#d0cca6" stroke="#77777f" stroke-width="1.1" stroke-opacity="0.8"/><circle cx="1577.2" cy="675.7" r="4.5" fill="#d0cca6" stroke="#77777f" stroke-width="1.1" stroke-opacity="0.8"/><circle cx="1616.4" cy="694.5" r="4.5" fill="#d0cca6" stroke="#77777f" stroke-width="1.1" stroke-opacity="0.8"/><circle cx="1476.5" cy="809.6" r="4.5" fill="#d0cca6" stroke="#77777f" stroke-width="1.1" stroke-opacity="0.8"/><circle cx="1526.3" cy="799.5" r="4.5" fill="#7db99f" stroke="#77777f" stroke-width="1.1" stroke-opacity="0.8"/><circle cx="1524.1" cy="842.0" r="4.5" fill="#d0cca6" stroke="#77777f" stroke-width="1.1" stroke-opacity="0.8"/><circle cx="1572.4" cy="771.2" r="4.5" fill="#d0cca6" stroke="#77777f" stroke-width="1.1" stroke-opacity="0.8"/><circle cx="1323.8" cy="717.4" r="4.5" fill="#efe6e3" stroke="#77777f" stroke-width="1.1" stroke-opacity="0.8"/><circle cx="1330.3" cy="429.0" r="3.15" fill="#00647f" stroke="#77777f" stroke-width="1.1" stroke-opacity="0.8"/><circle cx="1332.1" cy="435.8" r="3.15" fill="#b4485c" stroke="#77777f" stroke-width="1.1" stroke-opacity="0.8"/><circle cx="1348.6" cy="437.3" r="3.15" fill="#00647f" stroke="#77777f" stroke-width="1.1" stroke-opacity="0.8"/><circle cx="1341.1" cy="439.5" r="3.15" fill="#b4485c" stroke="#77777f" stroke-width="1.1" stroke-opacity="0.8"/><circle cx="1328.4" cy="444.0" r="3.15" fill="#b4485c" stroke="#77777f" stroke-width="1.1" stroke-opacity="0.8"/><circle cx="1339.6" cy="444.0" r="3.15" fill="#b4485c" stroke="#77777f" stroke-width="1.1" stroke-opacity="0.8"/><circle cx="1349.4" cy="442.5" r="3.15" fill="#b4485c" stroke="#77777f" stroke-width="1.1" stroke-opacity="0.8"/><circle cx="1347.1" cy="449.3" r="3.15" fill="#00647f" stroke="#77777f" stroke-width="1.1" stroke-opacity="0.8"/><circle cx="1351.7" cy="453.8" r="3.15" fill="#b4485c" stroke="#77777f" stroke-width="1.1" stroke-opacity="0.8"/><circle cx="1341.1" cy="456.0" r="3.15" fill="#b4485c" stroke="#77777f" stroke-width="1.1" stroke-opacity="0.8"/><circle cx="1338.1" cy="458.3" r="3.15" fill="#b4485c" stroke="#77777f" stroke-width="1.1" stroke-opacity="0.8"/><circle cx="1296.1" cy="435.0" r="3.15" fill="#b4485c" stroke="#77777f" stroke-width="1.1" stroke-opacity="0.8"/><circle cx="1296.8" cy="440.3" r="3.15" fill="#b4485c" stroke="#77777f" stroke-width="1.1" stroke-opacity="0.8"/><circle cx="1290.1" cy="447.8" r="3.15" fill="#00647f" stroke="#77777f" stroke-width="1.1" stroke-opacity="0.8"/><circle cx="1296.1" cy="450.8" r="3.15" fill="#b4485c" stroke="#77777f" stroke-width="1.1" stroke-opacity="0.8"/><circle cx="1273.5" cy="455.3" r="3.15" fill="#00647f" stroke="#77777f" stroke-width="1.1" stroke-opacity="0.8"/><circle cx="1264.1" cy="459.1" r="3.15" fill="#00647f" stroke="#77777f" stroke-width="1.1" stroke-opacity="0.8"/><circle cx="1281.1" cy="460.6" r="3.15" fill="#b4485c" stroke="#77777f" stroke-width="1.1" stroke-opacity="0.8"/><circle cx="1257.0" cy="464.3" r="3.15" fill="#b4485c" stroke="#77777f" stroke-width="1.1" stroke-opacity="0.8"/><circle cx="1260.0" cy="464.3" r="3.15" fill="#b4485c" stroke="#77777f" stroke-width="1.1" stroke-opacity="0.8"/><circle cx="1263.8" cy="463.6" r="3.15" fill="#b4485c" stroke="#77777f" stroke-width="1.1" stroke-opacity="0.8"/><circle cx="1269.0" cy="463.6" r="3.15" fill="#b4485c" stroke="#77777f" stroke-width="1.1" stroke-opacity="0.8"/><circle cx="1276.6" cy="466.6" r="3.15" fill="#b4485c" stroke="#77777f" stroke-width="1.1" stroke-opacity="0.8"/><circle cx="1280.3" cy="471.8" r="3.15" fill="#b4485c" stroke="#77777f" stroke-width="1.1" stroke-opacity="0.8"/><circle cx="1296.1" cy="463.1" r="3.15" fill="#00647f" stroke="#77777f" stroke-width="1.1" stroke-opacity="0.8"/><circle cx="1299.8" cy="469.3" r="3.15" fill="#d0cca6" stroke="#77777f" stroke-width="1.1" stroke-opacity="0.8"/><circle cx="1309.1" cy="468.1" r="3.15" fill="#b4485c" stroke="#77777f" stroke-width="1.1" stroke-opacity="0.8"/><circle cx="1311.1" cy="473.3" r="3.15" fill="#b4485c" stroke="#77777f" stroke-width="1.1" stroke-opacity="0.8"/><circle cx="1325.4" cy="460.6" r="3.15" fill="#b85f9b" stroke="#77777f" stroke-width="1.1" stroke-opacity="0.8"/><circle cx="1320.9" cy="470.3" r="3.15" fill="#797a2f" stroke="#77777f" stroke-width="1.1" stroke-opacity="0.8"/><circle cx="1327.2" cy="472.6" r="3.15" fill="#797a2f" stroke="#77777f" stroke-width="1.1" stroke-opacity="0.8"/><circle cx="1335.9" cy="468.8" r="3.15" fill="#797a2f" stroke="#77777f" stroke-width="1.1" stroke-opacity="0.8"/><circle cx="1340.1" cy="467.8" r="3.15" fill="#797a2f" stroke="#77777f" stroke-width="1.1" stroke-opacity="0.8"/><circle cx="1353.6" cy="471.8" r="3.15" fill="#c3637c" stroke="#77777f" stroke-width="1.1" stroke-opacity="0.8"/><circle cx="1265.3" cy="474.8" r="3.15" fill="#00647f" stroke="#77777f" stroke-width="1.1" stroke-opacity="0.8"/><circle cx="1269.8" cy="478.6" r="3.15" fill="#b4485c" stroke="#77777f" stroke-width="1.1" stroke-opacity="0.8"/><circle cx="1279.1" cy="479.3" r="3.15" fill="#d0cca6" stroke="#77777f" stroke-width="1.1" stroke-opacity="0.8"/><circle cx="1308.1" cy="476.3" r="3.15" fill="#797a2f" stroke="#77777f" stroke-width="1.1" stroke-opacity="0.8"/><circle cx="1314.1" cy="476.3" r="3.15" fill="#d0cca6" stroke="#77777f" stroke-width="1.1" stroke-opacity="0.8"/><circle cx="1324.6" cy="477.1" r="3.15" fill="#d0cca6" stroke="#77777f" stroke-width="1.1" stroke-opacity="0.8"/><circle cx="1328.4" cy="477.8" r="3.15" fill="#b4485c" stroke="#77777f" stroke-width="1.1" stroke-opacity="0.8"/><circle cx="1336.6" cy="474.1" r="3.15" fill="#d0cca6" stroke="#77777f" stroke-width="1.1" stroke-opacity="0.8"/><circle cx="1300.3" cy="483.8" r="3.15" fill="#d0cca6" stroke="#77777f" stroke-width="1.1" stroke-opacity="0.8"/><circle cx="1311.8" cy="484.6" r="3.15" fill="#797a2f" stroke="#77777f" stroke-width="1.1" stroke-opacity="0.8"/><circle cx="1308.8" cy="488.3" r="3.15" fill="#b85f9b" stroke="#77777f" stroke-width="1.1" stroke-opacity="0.8"/><circle cx="1263.0" cy="486.8" r="3.15" fill="#b4485c" stroke="#77777f" stroke-width="1.1" stroke-opacity="0.8"/><circle cx="1253.7" cy="490.1" r="3.15" fill="#00647f" stroke="#77777f" stroke-width="1.1" stroke-opacity="0.8"/><circle cx="1243.8" cy="494.0" r="3.15" fill="#d0cca6" stroke="#77777f" stroke-width="1.1" stroke-opacity="0.8"/><circle cx="1255.1" cy="495.8" r="3.15" fill="#b4485c" stroke="#77777f" stroke-width="1.1" stroke-opacity="0.8"/><circle cx="1275.1" cy="489.1" r="3.15" fill="#b4485c" stroke="#77777f" stroke-width="1.1" stroke-opacity="0.8"/><circle cx="1283.3" cy="489.4" r="3.15" fill="#b4485c" stroke="#77777f" stroke-width="1.1" stroke-opacity="0.8"/><circle cx="1275.8" cy="498.9" r="3.15" fill="#d0cca6" stroke="#77777f" stroke-width="1.1" stroke-opacity="0.8"/><circle cx="1319.1" cy="496.9" r="3.15" fill="#d0cca6" stroke="#77777f" stroke-width="1.1" stroke-opacity="0.8"/><circle cx="1321.6" cy="498.9" r="3.15" fill="#693b85" stroke="#77777f" stroke-width="1.1" stroke-opacity="0.8"/><circle cx="1335.1" cy="492.8" r="3.15" fill="#d0cca6" stroke="#77777f" stroke-width="1.1" stroke-opacity="0.8"/><circle cx="1343.8" cy="495.1" r="3.15" fill="#9bd9d8" stroke="#77777f" stroke-width="1.1" stroke-opacity="0.8"/><circle cx="1349.7" cy="493.6" r="3.15" fill="#b4485c" stroke="#77777f" stroke-width="1.1" stroke-opacity="0.8"/><circle cx="1269.3" cy="501.9" r="3.15" fill="#b85f9b" stroke="#77777f" stroke-width="1.1" stroke-opacity="0.8"/><circle cx="1306.6" cy="500.7" r="3.15" fill="#d0cca6" stroke="#77777f" stroke-width="1.1" stroke-opacity="0.8"/><circle cx="1295.3" cy="505.9" r="3.15" fill="#b4485c" stroke="#77777f" stroke-width="1.1" stroke-opacity="0.8"/><circle cx="1314.9" cy="509.4" r="3.15" fill="#797a2f" stroke="#77777f" stroke-width="1.1" stroke-opacity="0.8"/><circle cx="1280.8" cy="511.9" r="3.15" fill="#797a2f" stroke="#77777f" stroke-width="1.1" stroke-opacity="0.8"/><circle cx="1287.8" cy="511.9" r="3.15" fill="#d0cca6" stroke="#77777f" stroke-width="1.1" stroke-opacity="0.8"/><circle cx="1352.1" cy="506.7" r="3.15" fill="#b4485c" stroke="#77777f" stroke-width="1.1" stroke-opacity="0.8"/><circle cx="1260.8" cy="511.6" r="3.15" fill="#b4485c" stroke="#77777f" stroke-width="1.1" stroke-opacity="0.8"/><circle cx="1263.8" cy="514.6" r="3.15" fill="#b4485c" stroke="#77777f" stroke-width="1.1" stroke-opacity="0.8"/><circle cx="1259.3" cy="517.6" r="3.15" fill="#b4485c" stroke="#77777f" stroke-width="1.1" stroke-opacity="0.8"/><circle cx="1269.0" cy="516.9" r="3.15" fill="#d0cca6" stroke="#77777f" stroke-width="1.1" stroke-opacity="0.8"/><circle cx="1252.8" cy="522.1" r="3.15" fill="#b4485c" stroke="#77777f" stroke-width="1.1" stroke-opacity="0.8"/><circle cx="1265.3" cy="522.9" r="3.15" fill="#b4485c" stroke="#77777f" stroke-width="1.1" stroke-opacity="0.8"/><circle cx="1254.0" cy="528.1" r="3.15" fill="#b4485c" stroke="#77777f" stroke-width="1.1" stroke-opacity="0.8"/><circle cx="1259.3" cy="530.4" r="3.15" fill="#b4485c" stroke="#77777f" stroke-width="1.1" stroke-opacity="0.8"/><circle cx="1263.8" cy="529.6" r="3.15" fill="#b4485c" stroke="#77777f" stroke-width="1.1" stroke-opacity="0.8"/><circle cx="1271.7" cy="526.6" r="3.15" fill="#d0cca6" stroke="#77777f" stroke-width="1.1" stroke-opacity="0.8"/><circle cx="1296.8" cy="525.1" r="3.15" fill="#b4485c" stroke="#77777f" stroke-width="1.1" stroke-opacity="0.8"/><circle cx="1302.8" cy="525.1" r="3.15" fill="#693b85" stroke="#77777f" stroke-width="1.1" stroke-opacity="0.8"/><circle cx="1295.3" cy="534.9" r="3.15" fill="#b4485c" stroke="#77777f" stroke-width="1.1" stroke-opacity="0.8"/><circle cx="1316.4" cy="525.6" r="3.15" fill="#9bd9d8" stroke="#77777f" stroke-width="1.1" stroke-opacity="0.8"/><circle cx="1332.6" cy="524.1" r="3.15" fill="#00647f" stroke="#77777f" stroke-width="1.1" stroke-opacity="0.8"/><circle cx="1349.4" cy="522.9" r="3.15" fill="#b4485c" stroke="#77777f" stroke-width="1.1" stroke-opacity="0.8"/><circle cx="1355.4" cy="523.6" r="3.15" fill="#b4485c" stroke="#77777f" stroke-width="1.1" stroke-opacity="0.8"/><circle cx="1348.9" cy="528.4" r="3.15" fill="#b4485c" stroke="#77777f" stroke-width="1.1" stroke-opacity="0.8"/><circle cx="1341.6" cy="530.7" r="3.15" fill="#c3637c" stroke="#77777f" stroke-width="1.1" stroke-opacity="0.8"/><circle cx="1348.3" cy="539.4" r="3.15" fill="#9bd9d8" stroke="#77777f" stroke-width="1.1" stroke-opacity="0.8"/><circle cx="1354.7" cy="540.9" r="3.15" fill="#d0cca6" stroke="#77777f" stroke-width="1.1" stroke-opacity="0.8"/><circle cx="1271.7" cy="550.2" r="3.15" fill="#b4485c" stroke="#77777f" stroke-width="1.1" stroke-opacity="0.8"/><circle cx="1370.1" cy="411.6" r="3.15" fill="#b4485c" stroke="#77777f" stroke-width="1.1" stroke-opacity="0.8"/><circle cx="1400.8" cy="407.3" r="3.15" fill="#b4485c" stroke="#77777f" stroke-width="1.1" stroke-opacity="0.8"/><circle cx="1411.3" cy="406.4" r="3.15" fill="#00647f" stroke="#77777f" stroke-width="1.1" stroke-opacity="0.8"/><circle cx="1417.0" cy="406.9" r="3.15" fill="#b4485c" stroke="#77777f" stroke-width="1.1" stroke-opacity="0.8"/><circle cx="1416.5" cy="412.5" r="3.15" fill="#00647f" stroke="#77777f" stroke-width="1.1" stroke-opacity="0.8"/><circle cx="1407.8" cy="412.5" r="3.15" fill="#b4485c" stroke="#77777f" stroke-width="1.1" stroke-opacity="0.8"/><circle cx="1392.0" cy="413.9" r="3.15" fill="#b4485c" stroke="#77777f" stroke-width="1.1" stroke-opacity="0.8"/><circle cx="1370.7" cy="417.8" r="3.15" fill="#00647f" stroke="#77777f" stroke-width="1.1" stroke-opacity="0.8"/><circle cx="1376.3" cy="420.9" r="3.15" fill="#00647f" stroke="#77777f" stroke-width="1.1" stroke-opacity="0.8"/><circle cx="1385.0" cy="418.6" r="3.15" fill="#00647f" stroke="#77777f" stroke-width="1.1" stroke-opacity="0.8"/><circle cx="1387.6" cy="423.0" r="3.15" fill="#00647f" stroke="#77777f" stroke-width="1.1" stroke-opacity="0.8"/><circle cx="1397.3" cy="419.5" r="3.15" fill="#b4485c" stroke="#77777f" stroke-width="1.1" stroke-opacity="0.8"/><circle cx="1404.3" cy="423.0" r="3.15" fill="#b4485c" stroke="#77777f" stroke-width="1.1" stroke-opacity="0.8"/><circle cx="1411.6" cy="423.9" r="3.15" fill="#c3637c" stroke="#77777f" stroke-width="1.1" stroke-opacity="0.8"/><circle cx="1396.4" cy="427.0" r="3.15" fill="#b4485c" stroke="#77777f" stroke-width="1.1" stroke-opacity="0.8"/><circle cx="1364.9" cy="427.9" r="3.15" fill="#b4485c" stroke="#77777f" stroke-width="1.1" stroke-opacity="0.8"/><circle cx="1380.6" cy="427.0" r="3.15" fill="#00647f" stroke="#77777f" stroke-width="1.1" stroke-opacity="0.8"/><circle cx="1375.0" cy="430.5" r="3.15" fill="#00647f" stroke="#77777f" stroke-width="1.1" stroke-opacity="0.8"/><circle cx="1376.3" cy="436.1" r="3.15" fill="#b4485c" stroke="#77777f" stroke-width="1.1" stroke-opacity="0.8"/><circle cx="1387.6" cy="434.4" r="3.15" fill="#00647f" stroke="#77777f" stroke-width="1.1" stroke-opacity="0.8"/><circle cx="1393.8" cy="436.7" r="3.15" fill="#b4485c" stroke="#77777f" stroke-width="1.1" stroke-opacity="0.8"/><circle cx="1389.4" cy="439.6" r="3.15" fill="#00647f" stroke="#77777f" stroke-width="1.1" stroke-opacity="0.8"/><circle cx="1418.3" cy="430.0" r="3.15" fill="#b4485c" stroke="#77777f" stroke-width="1.1" stroke-opacity="0.8"/><circle cx="1414.8" cy="430.9" r="3.15" fill="#00647f" stroke="#77777f" stroke-width="1.1" stroke-opacity="0.8"/><circle cx="1425.3" cy="434.4" r="3.15" fill="#b4485c" stroke="#77777f" stroke-width="1.1" stroke-opacity="0.8"/><circle cx="1406.0" cy="435.6" r="3.15" fill="#b4485c" stroke="#77777f" stroke-width="1.1" stroke-opacity="0.8"/><circle cx="1434.0" cy="427.0" r="3.15" fill="#b4485c" stroke="#77777f" stroke-width="1.1" stroke-opacity="0.8"/><circle cx="1454.1" cy="434.4" r="3.15" fill="#b4485c" stroke="#77777f" stroke-width="1.1" stroke-opacity="0.8"/><circle cx="1360.5" cy="437.9" r="3.15" fill="#b4485c" stroke="#77777f" stroke-width="1.1" stroke-opacity="0.8"/><circle cx="1368.0" cy="442.6" r="3.15" fill="#00647f" stroke="#77777f" stroke-width="1.1" stroke-opacity="0.8"/><circle cx="1408.6" cy="441.4" r="3.15" fill="#00647f" stroke="#77777f" stroke-width="1.1" stroke-opacity="0.8"/><circle cx="1413.4" cy="444.0" r="3.15" fill="#00647f" stroke="#77777f" stroke-width="1.1" stroke-opacity="0.8"/><circle cx="1421.2" cy="444.0" r="3.15" fill="#00647f" stroke="#77777f" stroke-width="1.1" stroke-opacity="0.8"/><circle cx="1422.6" cy="439.6" r="3.15" fill="#b4485c" stroke="#77777f" stroke-width="1.1" stroke-opacity="0.8"/><circle cx="1437.0" cy="441.7" r="3.15" fill="#b4485c" stroke="#77777f" stroke-width="1.1" stroke-opacity="0.8"/><circle cx="1442.8" cy="437.9" r="3.15" fill="#00647f" stroke="#77777f" stroke-width="1.1" stroke-opacity="0.8"/><circle cx="1445.4" cy="440.5" r="3.15" fill="#00647f" stroke="#77777f" stroke-width="1.1" stroke-opacity="0.8"/><circle cx="1359.6" cy="446.6" r="3.15" fill="#b4485c" stroke="#77777f" stroke-width="1.1" stroke-opacity="0.8"/><circle cx="1369.3" cy="450.1" r="3.15" fill="#00647f" stroke="#77777f" stroke-width="1.1" stroke-opacity="0.8"/><circle cx="1373.6" cy="452.4" r="3.15" fill="#00647f" stroke="#77777f" stroke-width="1.1" stroke-opacity="0.8"/><circle cx="1390.6" cy="447.0" r="3.15" fill="#d0cca6" stroke="#77777f" stroke-width="1.1" stroke-opacity="0.8"/><circle cx="1401.6" cy="446.6" r="3.15" fill="#b4485c" stroke="#77777f" stroke-width="1.1" stroke-opacity="0.8"/><circle cx="1406.9" cy="449.6" r="3.15" fill="#b4485c" stroke="#77777f" stroke-width="1.1" stroke-opacity="0.8"/><circle cx="1409.5" cy="454.5" r="3.15" fill="#00647f" stroke="#77777f" stroke-width="1.1" stroke-opacity="0.8"/><circle cx="1416.5" cy="454.5" r="3.15" fill="#b4485c" stroke="#77777f" stroke-width="1.1" stroke-opacity="0.8"/><circle cx="1420.0" cy="447.5" r="3.15" fill="#d0cca6" stroke="#77777f" stroke-width="1.1" stroke-opacity="0.8"/><circle cx="1434.0" cy="451.9" r="3.15" fill="#b4485c" stroke="#77777f" stroke-width="1.1" stroke-opacity="0.8"/><circle cx="1442.2" cy="451.5" r="3.15" fill="#b4485c" stroke="#77777f" stroke-width="1.1" stroke-opacity="0.8"/><circle cx="1469.5" cy="444.5" r="3.15" fill="#b4485c" stroke="#77777f" stroke-width="1.1" stroke-opacity="0.8"/><circle cx="1357.9" cy="455.9" r="3.15" fill="#b4485c" stroke="#77777f" stroke-width="1.1" stroke-opacity="0.8"/><circle cx="1371.9" cy="458.0" r="3.15" fill="#b4485c" stroke="#77777f" stroke-width="1.1" stroke-opacity="0.8"/><circle cx="1381.5" cy="456.6" r="3.15" fill="#b4485c" stroke="#77777f" stroke-width="1.1" stroke-opacity="0.8"/><circle cx="1385.9" cy="462.0" r="3.15" fill="#b4485c" stroke="#77777f" stroke-width="1.1" stroke-opacity="0.8"/><circle cx="1368.4" cy="466.8" r="3.15" fill="#00647f" stroke="#77777f" stroke-width="1.1" stroke-opacity="0.8"/><circle cx="1374.2" cy="465.9" r="3.15" fill="#b4485c" stroke="#77777f" stroke-width="1.1" stroke-opacity="0.8"/><circle cx="1378.0" cy="465.0" r="3.15" fill="#b4485c" stroke="#77777f" stroke-width="1.1" stroke-opacity="0.8"/><circle cx="1407.8" cy="463.3" r="3.15" fill="#b4485c" stroke="#77777f" stroke-width="1.1" stroke-opacity="0.8"/><circle cx="1429.1" cy="462.0" r="3.15" fill="#d0cca6" stroke="#77777f" stroke-width="1.1" stroke-opacity="0.8"/><circle cx="1455.9" cy="456.6" r="3.15" fill="#b4485c" stroke="#77777f" stroke-width="1.1" stroke-opacity="0.8"/><circle cx="1469.9" cy="460.1" r="3.15" fill="#9bd9d8" stroke="#77777f" stroke-width="1.1" stroke-opacity="0.8"/><circle cx="1472.0" cy="453.6" r="3.15" fill="#797a2f" stroke="#77777f" stroke-width="1.1" stroke-opacity="0.8"/><circle cx="1477.4" cy="466.8" r="3.15" fill="#d0cca6" stroke="#77777f" stroke-width="1.1" stroke-opacity="0.8"/><circle cx="1359.6" cy="473.8" r="3.15" fill="#797a2f" stroke="#77777f" stroke-width="1.1" stroke-opacity="0.8"/><circle cx="1364.9" cy="472.9" r="3.15" fill="#c3637c" stroke="#77777f" stroke-width="1.1" stroke-opacity="0.8"/><circle cx="1376.3" cy="479.0" r="3.15" fill="#d0cca6" stroke="#77777f" stroke-width="1.1" stroke-opacity="0.8"/><circle cx="1384.1" cy="477.3" r="3.15" fill="#d0cca6" stroke="#77777f" stroke-width="1.1" stroke-opacity="0.8"/><circle cx="1387.3" cy="472.9" r="3.15" fill="#b4485c" stroke="#77777f" stroke-width="1.1" stroke-opacity="0.8"/><circle cx="1390.3" cy="480.8" r="3.15" fill="#b4485c" stroke="#77777f" stroke-width="1.1" stroke-opacity="0.8"/><circle cx="1380.6" cy="474.6" r="3.15" fill="#b4485c" stroke="#77777f" stroke-width="1.1" stroke-opacity="0.8"/><circle cx="1429.1" cy="477.3" r="3.15" fill="#b4485c" stroke="#77777f" stroke-width="1.1" stroke-opacity="0.8"/><circle cx="1377.5" cy="491.8" r="3.15" fill="#b4485c" stroke="#77777f" stroke-width="1.1" stroke-opacity="0.8"/><circle cx="1379.8" cy="488.6" r="3.15" fill="#d0cca6" stroke="#77777f" stroke-width="1.1" stroke-opacity="0.8"/><circle cx="1411.6" cy="494.4" r="3.15" fill="#693b85" stroke="#77777f" stroke-width="1.1" stroke-opacity="0.8"/><circle cx="1420.0" cy="495.3" r="3.15" fill="#d0cca6" stroke="#77777f" stroke-width="1.1" stroke-opacity="0.8"/><circle cx="1365.2" cy="505.8" r="3.15" fill="#d0cca6" stroke="#77777f" stroke-width="1.1" stroke-opacity="0.8"/><circle cx="1396.4" cy="508.4" r="3.15" fill="#00647f" stroke="#77777f" stroke-width="1.1" stroke-opacity="0.8"/><circle cx="1405.1" cy="504.9" r="3.15" fill="#d0cca6" stroke="#77777f" stroke-width="1.1" stroke-opacity="0.8"/><circle cx="1408.6" cy="505.8" r="3.15" fill="#693b85" stroke="#77777f" stroke-width="1.1" stroke-opacity="0.8"/><circle cx="1403.0" cy="511.4" r="3.15" fill="#693b85" stroke="#77777f" stroke-width="1.1" stroke-opacity="0.8"/><circle cx="1382.7" cy="514.0" r="3.15" fill="#797a2f" stroke="#77777f" stroke-width="1.1" stroke-opacity="0.8"/><circle cx="1388.9" cy="518.9" r="3.15" fill="#efe6e3" stroke="#77777f" stroke-width="1.1" stroke-opacity="0.8"/><circle cx="1381.2" cy="521.9" r="3.15" fill="#b4485c" stroke="#77777f" stroke-width="1.1" stroke-opacity="0.8"/><circle cx="1415.1" cy="513.7" r="3.15" fill="#b85f9b" stroke="#77777f" stroke-width="1.1" stroke-opacity="0.8"/><circle cx="1413.9" cy="519.6" r="3.15" fill="#797a2f" stroke="#77777f" stroke-width="1.1" stroke-opacity="0.8"/><circle cx="1423.9" cy="519.6" r="3.15" fill="#693b85" stroke="#77777f" stroke-width="1.1" stroke-opacity="0.8"/><circle cx="1413.9" cy="529.8" r="3.15" fill="#797a2f" stroke="#77777f" stroke-width="1.1" stroke-opacity="0.8"/><circle cx="1358.2" cy="524.5" r="3.15" fill="#b4485c" stroke="#77777f" stroke-width="1.1" stroke-opacity="0.8"/><circle cx="1363.7" cy="529.4" r="3.15" fill="#b4485c" stroke="#77777f" stroke-width="1.1" stroke-opacity="0.8"/><circle cx="1371.4" cy="527.5" r="3.15" fill="#b4485c" stroke="#77777f" stroke-width="1.1" stroke-opacity="0.8"/><circle cx="1370.1" cy="531.5" r="3.15" fill="#b4485c" stroke="#77777f" stroke-width="1.1" stroke-opacity="0.8"/><circle cx="1376.6" cy="530.6" r="3.15" fill="#c3637c" stroke="#77777f" stroke-width="1.1" stroke-opacity="0.8"/><circle cx="1365.8" cy="539.7" r="3.15" fill="#00647f" stroke="#77777f" stroke-width="1.1" stroke-opacity="0.8"/><circle cx="1386.8" cy="538.0" r="3.15" fill="#00647f" stroke="#77777f" stroke-width="1.1" stroke-opacity="0.8"/><circle cx="1389.4" cy="535.9" r="3.15" fill="#efe6e3" stroke="#77777f" stroke-width="1.1" stroke-opacity="0.8"/><circle cx="1370.7" cy="543.8" r="3.15" fill="#b4485c" stroke="#77777f" stroke-width="1.1" stroke-opacity="0.8"/><circle cx="1378.0" cy="543.2" r="3.15" fill="#b4485c" stroke="#77777f" stroke-width="1.1" stroke-opacity="0.8"/><circle cx="1384.7" cy="548.1" r="3.15" fill="#b4485c" stroke="#77777f" stroke-width="1.1" stroke-opacity="0.8"/><circle cx="1370.1" cy="550.4" r="3.15" fill="#b4485c" stroke="#77777f" stroke-width="1.1" stroke-opacity="0.8"/><circle cx="1374.5" cy="553.4" r="3.15" fill="#d0cca6" stroke="#77777f" stroke-width="1.1" stroke-opacity="0.8"/><circle cx="1392.0" cy="553.4" r="3.15" fill="#c3637c" stroke="#77777f" stroke-width="1.1" stroke-opacity="0.8"/><circle cx="1354.9" cy="541.1" r="3.15" fill="#d0cca6" stroke="#77777f" stroke-width="1.1" stroke-opacity="0.8"/><circle cx="1357.0" cy="543.8" r="3.15" fill="#d0cca6" stroke="#77777f" stroke-width="1.1" stroke-opacity="0.8"/><circle cx="1385.3" cy="547.7" r="3.15" fill="#b4485c" stroke="#77777f" stroke-width="1.1" stroke-opacity="0.8"/><circle cx="1370.8" cy="550.3" r="3.15" fill="#b4485c" stroke="#77777f" stroke-width="1.1" stroke-opacity="0.8"/><circle cx="1373.3" cy="552.9" r="3.15" fill="#d0cca6" stroke="#77777f" stroke-width="1.1" stroke-opacity="0.8"/><circle cx="1375.0" cy="555.8" r="3.15" fill="#797a2f" stroke="#77777f" stroke-width="1.1" stroke-opacity="0.8"/><circle cx="1391.4" cy="552.9" r="3.15" fill="#c3637c" stroke="#77777f" stroke-width="1.1" stroke-opacity="0.8"/><circle cx="1362.2" cy="565.4" r="3.15" fill="#797a2f" stroke="#77777f" stroke-width="1.1" stroke-opacity="0.8"/><circle cx="1367.3" cy="567.1" r="3.15" fill="#c3637c" stroke="#77777f" stroke-width="1.1" stroke-opacity="0.8"/><circle cx="1381.1" cy="564.9" r="3.15" fill="#00647f" stroke="#77777f" stroke-width="1.1" stroke-opacity="0.8"/><circle cx="1367.3" cy="573.5" r="3.15" fill="#d0cca6" stroke="#77777f" stroke-width="1.1" stroke-opacity="0.8"/><circle cx="1401.7" cy="564.5" r="3.15" fill="#d0cca6" stroke="#77777f" stroke-width="1.1" stroke-opacity="0.8"/><circle cx="1407.7" cy="566.6" r="3.15" fill="#693b85" stroke="#77777f" stroke-width="1.1" stroke-opacity="0.8"/><circle cx="1405.9" cy="563.2" r="3.15" fill="#b4485c" stroke="#77777f" stroke-width="1.1" stroke-opacity="0.8"/><circle cx="1373.3" cy="582.1" r="3.15" fill="#c3637c" stroke="#77777f" stroke-width="1.1" stroke-opacity="0.8"/><circle cx="1379.3" cy="580.3" r="3.15" fill="#c3637c" stroke="#77777f" stroke-width="1.1" stroke-opacity="0.8"/><circle cx="1386.2" cy="582.1" r="3.15" fill="#c3637c" stroke="#77777f" stroke-width="1.1" stroke-opacity="0.8"/><circle cx="1387.9" cy="577.8" r="3.15" fill="#c3637c" stroke="#77777f" stroke-width="1.1" stroke-opacity="0.8"/><circle cx="1391.4" cy="581.2" r="3.15" fill="#c3637c" stroke="#77777f" stroke-width="1.1" stroke-opacity="0.8"/><circle cx="1405.9" cy="587.2" r="3.15" fill="#d0cca6" stroke="#77777f" stroke-width="1.1" stroke-opacity="0.8"/><circle cx="1369.9" cy="593.2" r="3.15" fill="#d0cfe6" stroke="#77777f" stroke-width="1.1" stroke-opacity="0.8"/><circle cx="1380.2" cy="593.7" r="3.15" fill="#d0cca6" stroke="#77777f" stroke-width="1.1" stroke-opacity="0.8"/><circle cx="1363.4" cy="598.0" r="3.15" fill="#7db99f" stroke="#77777f" stroke-width="1.1" stroke-opacity="0.8"/><circle cx="1403.4" cy="599.2" r="3.15" fill="#b4485c" stroke="#77777f" stroke-width="1.1" stroke-opacity="0.8"/><circle cx="1409.4" cy="596.7" r="3.15" fill="#c3637c" stroke="#77777f" stroke-width="1.1" stroke-opacity="0.8"/><circle cx="1405.1" cy="594.9" r="3.15" fill="#c3637c" stroke="#77777f" stroke-width="1.1" stroke-opacity="0.8"/><circle cx="1427.4" cy="573.0" r="3.15" fill="#693b85" stroke="#77777f" stroke-width="1.1" stroke-opacity="0.8"/><circle cx="1442.3" cy="560.9" r="3.15" fill="#b4485c" stroke="#77777f" stroke-width="1.1" stroke-opacity="0.8"/><circle cx="1462.6" cy="563.2" r="3.15" fill="#b4485c" stroke="#77777f" stroke-width="1.1" stroke-opacity="0.8"/><circle cx="1464.3" cy="561.5" r="3.15" fill="#d0cca6" stroke="#77777f" stroke-width="1.1" stroke-opacity="0.8"/><circle cx="1464.0" cy="579.5" r="3.15" fill="#c3637c" stroke="#77777f" stroke-width="1.1" stroke-opacity="0.8"/><circle cx="1457.4" cy="583.8" r="3.15" fill="#00647f" stroke="#77777f" stroke-width="1.1" stroke-opacity="0.8"/><circle cx="1439.4" cy="587.2" r="3.15" fill="#b4485c" stroke="#77777f" stroke-width="1.1" stroke-opacity="0.8"/><circle cx="1446.3" cy="586.7" r="3.15" fill="#c3637c" stroke="#77777f" stroke-width="1.1" stroke-opacity="0.8"/><circle cx="1425.2" cy="590.6" r="3.15" fill="#d0cca6" stroke="#77777f" stroke-width="1.1" stroke-opacity="0.8"/><circle cx="1436.8" cy="594.9" r="3.15" fill="#9bd9d8" stroke="#77777f" stroke-width="1.1" stroke-opacity="0.8"/><circle cx="1465.2" cy="591.5" r="3.15" fill="#b4485c" stroke="#77777f" stroke-width="1.1" stroke-opacity="0.8"/><circle cx="1465.2" cy="599.7" r="3.15" fill="#b4485c" stroke="#77777f" stroke-width="1.1" stroke-opacity="0.8"/><circle cx="1470.3" cy="599.7" r="3.15" fill="#00647f" stroke="#77777f" stroke-width="1.1" stroke-opacity="0.8"/><circle cx="1471.2" cy="595.8" r="3.15" fill="#b4485c" stroke="#77777f" stroke-width="1.1" stroke-opacity="0.8"/><circle cx="1420.5" cy="600.9" r="3.15" fill="#b4485c" stroke="#77777f" stroke-width="1.1" stroke-opacity="0.8"/><circle cx="1426.0" cy="604.9" r="3.15" fill="#00647f" stroke="#77777f" stroke-width="1.1" stroke-opacity="0.8"/><circle cx="1439.1" cy="610.0" r="3.15" fill="#d0cca6" stroke="#77777f" stroke-width="1.1" stroke-opacity="0.8"/><circle cx="1431.2" cy="614.3" r="3.15" fill="#b4485c" stroke="#77777f" stroke-width="1.1" stroke-opacity="0.8"/><circle cx="1434.3" cy="611.2" r="3.15" fill="#797a2f" stroke="#77777f" stroke-width="1.1" stroke-opacity="0.8"/><circle cx="1472.9" cy="608.7" r="3.15" fill="#b4485c" stroke="#77777f" stroke-width="1.1" stroke-opacity="0.8"/><circle cx="1470.3" cy="613.8" r="3.15" fill="#c3637c" stroke="#77777f" stroke-width="1.1" stroke-opacity="0.8"/><circle cx="1451.4" cy="616.4" r="3.15" fill="#00647f" stroke="#77777f" stroke-width="1.1" stroke-opacity="0.8"/><circle cx="1453.7" cy="619.8" r="3.15" fill="#b4485c" stroke="#77777f" stroke-width="1.1" stroke-opacity="0.8"/><circle cx="1486.6" cy="611.8" r="3.15" fill="#00647f" stroke="#77777f" stroke-width="1.1" stroke-opacity="0.8"/><circle cx="1492.6" cy="614.2" r="3.15" fill="#b4485c" stroke="#77777f" stroke-width="1.1" stroke-opacity="0.8"/><circle cx="1497.4" cy="619.5" r="3.15" fill="#797a2f" stroke="#77777f" stroke-width="1.1" stroke-opacity="0.8"/><circle cx="1483.7" cy="622.1" r="3.15" fill="#b4485c" stroke="#77777f" stroke-width="1.1" stroke-opacity="0.8"/><circle cx="1479.8" cy="625.8" r="3.15" fill="#d0cca6" stroke="#77777f" stroke-width="1.1" stroke-opacity="0.8"/><circle cx="1484.9" cy="625.0" r="3.15" fill="#c3637c" stroke="#77777f" stroke-width="1.1" stroke-opacity="0.8"/><circle cx="1381.4" cy="624.1" r="3.15" fill="#c3637c" stroke="#77777f" stroke-width="1.1" stroke-opacity="0.8"/><circle cx="1438.6" cy="624.5" r="3.15" fill="#b4485c" stroke="#77777f" stroke-width="1.1" stroke-opacity="0.8"/><circle cx="1443.7" cy="622.7" r="3.15" fill="#b4485c" stroke="#77777f" stroke-width="1.1" stroke-opacity="0.8"/><circle cx="1439.4" cy="632.2" r="3.15" fill="#c3637c" stroke="#77777f" stroke-width="1.1" stroke-opacity="0.8"/><circle cx="1434.3" cy="635.3" r="3.15" fill="#b4485c" stroke="#77777f" stroke-width="1.1" stroke-opacity="0.8"/><circle cx="1449.2" cy="633.6" r="3.15" fill="#b4485c" stroke="#77777f" stroke-width="1.1" stroke-opacity="0.8"/><circle cx="1453.5" cy="637.5" r="3.15" fill="#00647f" stroke="#77777f" stroke-width="1.1" stroke-opacity="0.8"/><circle cx="1444.6" cy="637.0" r="3.15" fill="#b4485c" stroke="#77777f" stroke-width="1.1" stroke-opacity="0.8"/><circle cx="1435.1" cy="638.7" r="3.15" fill="#b85f9b" stroke="#77777f" stroke-width="1.1" stroke-opacity="0.8"/><circle cx="1470.0" cy="633.2" r="3.15" fill="#d0cca6" stroke="#77777f" stroke-width="1.1" stroke-opacity="0.8"/><circle cx="1478.6" cy="635.3" r="3.15" fill="#b4485c" stroke="#77777f" stroke-width="1.1" stroke-opacity="0.8"/><circle cx="1496.4" cy="637.0" r="3.15" fill="#b4485c" stroke="#77777f" stroke-width="1.1" stroke-opacity="0.8"/><circle cx="1457.8" cy="640.4" r="3.15" fill="#b4485c" stroke="#77777f" stroke-width="1.1" stroke-opacity="0.8"/><circle cx="1461.7" cy="643.0" r="3.15" fill="#b85f9b" stroke="#77777f" stroke-width="1.1" stroke-opacity="0.8"/><circle cx="1466.0" cy="641.6" r="3.15" fill="#b4485c" stroke="#77777f" stroke-width="1.1" stroke-opacity="0.8"/><circle cx="1472.0" cy="643.0" r="3.15" fill="#b4485c" stroke="#77777f" stroke-width="1.1" stroke-opacity="0.8"/><circle cx="1472.4" cy="647.3" r="3.15" fill="#d0cca6" stroke="#77777f" stroke-width="1.1" stroke-opacity="0.8"/><circle cx="1425.7" cy="643.9" r="3.15" fill="#d0cca6" stroke="#77777f" stroke-width="1.1" stroke-opacity="0.8"/><circle cx="1440.3" cy="646.4" r="3.15" fill="#b4485c" stroke="#77777f" stroke-width="1.1" stroke-opacity="0.8"/><circle cx="1441.7" cy="649.4" r="3.15" fill="#693b85" stroke="#77777f" stroke-width="1.1" stroke-opacity="0.8"/><circle cx="1450.9" cy="646.8" r="3.15" fill="#797a2f" stroke="#77777f" stroke-width="1.1" stroke-opacity="0.8"/><circle cx="1439.9" cy="653.3" r="3.15" fill="#d0cca6" stroke="#77777f" stroke-width="1.1" stroke-opacity="0.8"/><circle cx="1446.3" cy="660.7" r="3.15" fill="#693b85" stroke="#77777f" stroke-width="1.1" stroke-opacity="0.8"/><circle cx="1486.1" cy="649.4" r="3.15" fill="#00647f" stroke="#77777f" stroke-width="1.1" stroke-opacity="0.8"/><circle cx="1468.6" cy="655.0" r="3.15" fill="#b4485c" stroke="#77777f" stroke-width="1.1" stroke-opacity="0.8"/><circle cx="1472.9" cy="658.5" r="3.15" fill="#b4485c" stroke="#77777f" stroke-width="1.1" stroke-opacity="0.8"/><circle cx="1478.0" cy="657.3" r="3.15" fill="#d0cca6" stroke="#77777f" stroke-width="1.1" stroke-opacity="0.8"/><circle cx="1483.7" cy="658.1" r="3.15" fill="#797a2f" stroke="#77777f" stroke-width="1.1" stroke-opacity="0.8"/><circle cx="1490.1" cy="657.6" r="3.15" fill="#efe6e3" stroke="#77777f" stroke-width="1.1" stroke-opacity="0.8"/><circle cx="1497.3" cy="659.7" r="3.15" fill="#00647f" stroke="#77777f" stroke-width="1.1" stroke-opacity="0.8"/><circle cx="1473.8" cy="664.5" r="3.15" fill="#b4485c" stroke="#77777f" stroke-width="1.1" stroke-opacity="0.8"/><circle cx="1480.1" cy="666.2" r="3.15" fill="#b4485c" stroke="#77777f" stroke-width="1.1" stroke-opacity="0.8"/><circle cx="1491.4" cy="667.9" r="3.15" fill="#b4485c" stroke="#77777f" stroke-width="1.1" stroke-opacity="0.8"/><circle cx="1502.9" cy="666.5" r="3.15" fill="#b4485c" stroke="#77777f" stroke-width="1.1" stroke-opacity="0.8"/><circle cx="1488.3" cy="671.3" r="3.15" fill="#d0cca6" stroke="#77777f" stroke-width="1.1" stroke-opacity="0.8"/><circle cx="1496.9" cy="677.3" r="3.15" fill="#797a2f" stroke="#77777f" stroke-width="1.1" stroke-opacity="0.8"/><circle cx="1490.9" cy="681.6" r="3.15" fill="#693b85" stroke="#77777f" stroke-width="1.1" stroke-opacity="0.8"/><circle cx="1493.5" cy="685.9" r="3.15" fill="#797a2f" stroke="#77777f" stroke-width="1.1" stroke-opacity="0.8"/><circle cx="1497.8" cy="682.5" r="3.15" fill="#797a2f" stroke="#77777f" stroke-width="1.1" stroke-opacity="0.8"/><circle cx="1498.6" cy="694.5" r="3.15" fill="#d0cca6" stroke="#77777f" stroke-width="1.1" stroke-opacity="0.8"/><circle cx="1503.8" cy="695.4" r="3.15" fill="#b4485c" stroke="#77777f" stroke-width="1.1" stroke-opacity="0.8"/><circle cx="1491.8" cy="697.4" r="3.15" fill="#693b85" stroke="#77777f" stroke-width="1.1" stroke-opacity="0.8"/><circle cx="1486.7" cy="611.9" r="3.15" fill="#00647f" stroke="#77777f" stroke-width="1.1" stroke-opacity="0.8"/><circle cx="1492.4" cy="614.3" r="3.15" fill="#b4485c" stroke="#77777f" stroke-width="1.1" stroke-opacity="0.8"/><circle cx="1497.7" cy="619.2" r="3.15" fill="#797a2f" stroke="#77777f" stroke-width="1.1" stroke-opacity="0.8"/><circle cx="1496.4" cy="637.1" r="3.15" fill="#b4485c" stroke="#77777f" stroke-width="1.1" stroke-opacity="0.8"/><circle cx="1517.8" cy="634.3" r="3.15" fill="#b85f9b" stroke="#77777f" stroke-width="1.1" stroke-opacity="0.8"/><circle cx="1515.9" cy="642.9" r="3.15" fill="#797a2f" stroke="#77777f" stroke-width="1.1" stroke-opacity="0.8"/><circle cx="1519.8" cy="646.2" r="3.15" fill="#d0cca6" stroke="#77777f" stroke-width="1.1" stroke-opacity="0.8"/><circle cx="1532.0" cy="649.6" r="3.15" fill="#d0cca6" stroke="#77777f" stroke-width="1.1" stroke-opacity="0.8"/><circle cx="1548.4" cy="651.1" r="3.15" fill="#797a2f" stroke="#77777f" stroke-width="1.1" stroke-opacity="0.8"/><circle cx="1486.4" cy="649.3" r="3.15" fill="#00647f" stroke="#77777f" stroke-width="1.1" stroke-opacity="0.8"/><circle cx="1497.0" cy="659.3" r="3.15" fill="#00647f" stroke="#77777f" stroke-width="1.1" stroke-opacity="0.8"/><circle cx="1502.8" cy="665.7" r="3.15" fill="#b4485c" stroke="#77777f" stroke-width="1.1" stroke-opacity="0.8"/><circle cx="1507.7" cy="669.7" r="3.15" fill="#00647f" stroke="#77777f" stroke-width="1.1" stroke-opacity="0.8"/><circle cx="1526.2" cy="663.9" r="3.15" fill="#693b85" stroke="#77777f" stroke-width="1.1" stroke-opacity="0.8"/><circle cx="1531.1" cy="669.7" r="3.15" fill="#693b85" stroke="#77777f" stroke-width="1.1" stroke-opacity="0.8"/><circle cx="1534.2" cy="669.7" r="3.15" fill="#d0cca6" stroke="#77777f" stroke-width="1.1" stroke-opacity="0.8"/><circle cx="1516.5" cy="677.0" r="3.15" fill="#b4485c" stroke="#77777f" stroke-width="1.1" stroke-opacity="0.8"/><circle cx="1503.7" cy="695.8" r="3.15" fill="#b4485c" stroke="#77777f" stroke-width="1.1" stroke-opacity="0.8"/><circle cx="1516.5" cy="695.8" r="3.15" fill="#b4485c" stroke="#77777f" stroke-width="1.1" stroke-opacity="0.8"/><circle cx="1533.3" cy="704.9" r="3.15" fill="#b4485c" stroke="#77777f" stroke-width="1.1" stroke-opacity="0.8"/><circle cx="1530.2" cy="706.2" r="3.15" fill="#c3637c" stroke="#77777f" stroke-width="1.1" stroke-opacity="0.8"/><circle cx="1525.2" cy="712.2" r="3.15" fill="#b4485c" stroke="#77777f" stroke-width="1.1" stroke-opacity="0.8"/><circle cx="1547.5" cy="709.1" r="3.15" fill="#d0cca6" stroke="#77777f" stroke-width="1.1" stroke-opacity="0.8"/><circle cx="1534.7" cy="718.2" r="3.15" fill="#b4485c" stroke="#77777f" stroke-width="1.1" stroke-opacity="0.8"/><circle cx="1537.8" cy="719.5" r="3.15" fill="#b4485c" stroke="#77777f" stroke-width="1.1" stroke-opacity="0.8"/><circle cx="1570.8" cy="711.3" r="3.15" fill="#00647f" stroke="#77777f" stroke-width="1.1" stroke-opacity="0.8"/><circle cx="1543.3" cy="725.4" r="3.15" fill="#00647f" stroke="#77777f" stroke-width="1.1" stroke-opacity="0.8"/><circle cx="1547.9" cy="731.4" r="3.15" fill="#b4485c" stroke="#77777f" stroke-width="1.1" stroke-opacity="0.8"/><circle cx="1561.2" cy="735.9" r="3.15" fill="#b4485c" stroke="#77777f" stroke-width="1.1" stroke-opacity="0.8"/><circle cx="1571.2" cy="739.6" r="3.15" fill="#d0cca6" stroke="#77777f" stroke-width="1.1" stroke-opacity="0.8"/><circle cx="1560.3" cy="744.7" r="3.15" fill="#00647f" stroke="#77777f" stroke-width="1.1" stroke-opacity="0.8"/><circle cx="1564.3" cy="744.7" r="3.15" fill="#00647f" stroke="#77777f" stroke-width="1.1" stroke-opacity="0.8"/><circle cx="1559.4" cy="749.6" r="3.15" fill="#b85f9b" stroke="#77777f" stroke-width="1.1" stroke-opacity="0.8"/><circle cx="1552.6" cy="752.3" r="3.15" fill="#b4485c" stroke="#77777f" stroke-width="1.1" stroke-opacity="0.8"/><circle cx="1587.6" cy="696.7" r="3.15" fill="#797a2f" stroke="#77777f" stroke-width="1.1" stroke-opacity="0.8"/><circle cx="1590.4" cy="701.8" r="3.15" fill="#d0cfe6" stroke="#77777f" stroke-width="1.1" stroke-opacity="0.8"/><circle cx="1593.1" cy="703.1" r="3.15" fill="#797a2f" stroke="#77777f" stroke-width="1.1" stroke-opacity="0.8"/><circle cx="1613.7" cy="703.1" r="3.15" fill="#693b85" stroke="#77777f" stroke-width="1.1" stroke-opacity="0.8"/><circle cx="1630.5" cy="709.5" r="3.15" fill="#b4485c" stroke="#77777f" stroke-width="1.1" stroke-opacity="0.8"/><circle cx="1437.2" cy="807.6" r="3.15" fill="#d0cca6" stroke="#77777f" stroke-width="1.1" stroke-opacity="0.8"/><circle cx="1461.2" cy="809.8" r="3.15" fill="#efe6e3" stroke="#77777f" stroke-width="1.1" stroke-opacity="0.8"/><circle cx="1493.6" cy="828.5" r="3.15" fill="#b85f9b" stroke="#77777f" stroke-width="1.1" stroke-opacity="0.8"/><circle cx="1514.5" cy="825.9" r="3.15" fill="#b4485c" stroke="#77777f" stroke-width="1.1" stroke-opacity="0.8"/><circle cx="1522.4" cy="824.8" r="3.15" fill="#b4485c" stroke="#77777f" stroke-width="1.1" stroke-opacity="0.8"/><circle cx="1468.7" cy="836.6" r="3.15" fill="#797a2f" stroke="#77777f" stroke-width="1.1" stroke-opacity="0.8"/><circle cx="1524.1" cy="843.5" r="3.15" fill="#693b85" stroke="#77777f" stroke-width="1.1" stroke-opacity="0.8"/><circle cx="1502.2" cy="859.0" r="3.15" fill="#b4485c" stroke="#77777f" stroke-width="1.1" stroke-opacity="0.8"/><circle cx="1539.8" cy="808.7" r="3.15" fill="#b4485c" stroke="#77777f" stroke-width="1.1" stroke-opacity="0.8"/><circle cx="1550.3" cy="789.8" r="3.15" fill="#d0cca6" stroke="#77777f" stroke-width="1.1" stroke-opacity="0.8"/><circle cx="1567.1" cy="779.7" r="3.15" fill="#b4485c" stroke="#77777f" stroke-width="1.1" stroke-opacity="0.8"/><circle cx="1564.3" cy="772.7" r="3.15" fill="#693b85" stroke="#77777f" stroke-width="1.1" stroke-opacity="0.8"/><circle cx="1571.8" cy="764.7" r="3.15" fill="#00647f" stroke="#77777f" stroke-width="1.1" stroke-opacity="0.8"/><circle cx="1576.7" cy="758.3" r="3.15" fill="#b4485c" stroke="#77777f" stroke-width="1.1" stroke-opacity="0.8"/><circle cx="1586.0" cy="754.0" r="3.15" fill="#797a2f" stroke="#77777f" stroke-width="1.1" stroke-opacity="0.8"/><circle cx="1588.5" cy="761.9" r="3.15" fill="#b85f9b" stroke="#77777f" stroke-width="1.1" stroke-opacity="0.8"/><circle cx="1552.5" cy="752.3" r="3.15" fill="#b4485c" stroke="#77777f" stroke-width="1.1" stroke-opacity="0.8"/><circle cx="1491.5" cy="698.2" r="3.15" fill="#693b85" stroke="#77777f" stroke-width="1.1" stroke-opacity="0.8"/><circle cx="1337.6" cy="675.6" r="3.15" fill="#00647f" stroke="#77777f" stroke-width="1.1" stroke-opacity="0.8"/><circle cx="1314.8" cy="682.8" r="3.15" fill="#00647f" stroke="#77777f" stroke-width="1.1" stroke-opacity="0.8"/><circle cx="1295.5" cy="685.8" r="3.15" fill="#9bd9d8" stroke="#77777f" stroke-width="1.1" stroke-opacity="0.8"/><circle cx="1299.7" cy="686.6" r="3.15" fill="#b4485c" stroke="#77777f" stroke-width="1.1" stroke-opacity="0.8"/><circle cx="1319.6" cy="697.1" r="3.15" fill="#00647f" stroke="#77777f" stroke-width="1.1" stroke-opacity="0.8"/><circle cx="1320.6" cy="712.1" r="3.15" fill="#b85f9b" stroke="#77777f" stroke-width="1.1" stroke-opacity="0.8"/><circle cx="1339.9" cy="712.1" r="3.15" fill="#d0cca6" stroke="#77777f" stroke-width="1.1" stroke-opacity="0.8"/><circle cx="1306.5" cy="726.4" r="3.15" fill="#b4485c" stroke="#77777f" stroke-width="1.1" stroke-opacity="0.8"/><circle cx="1336.6" cy="745.6" r="3.15" fill="#00647f" stroke="#77777f" stroke-width="1.1" stroke-opacity="0.8"/><circle cx="1318.1" cy="747.7" r="3.15" fill="#693b85" stroke="#77777f" stroke-width="1.1" stroke-opacity="0.8"/><circle cx="1319.1" cy="755.7" r="3.15" fill="#7db99f" stroke="#77777f" stroke-width="1.1" stroke-opacity="0.8"/><circle cx="1299.6" cy="757.2" r="3.15" fill="#9bd9d8" stroke="#77777f" stroke-width="1.1" stroke-opacity="0.8"/><circle cx="1320.0" cy="762.4" r="3.15" fill="#d0cca6" stroke="#77777f" stroke-width="1.1" stroke-opacity="0.8"/><circle cx="1381.3" cy="623.9" r="3.15" fill="#c3637c" stroke="#77777f" stroke-width="1.1" stroke-opacity="0.8"/><g stroke="#fff" stroke-width="3" stroke-linejoin="round" opacity="0.8"><text x="1678.44" y="875.70" font-size="15.8" fill="#333" textLength="221.58" lengthAdjust="spacingAndGlyphs">© OpenStreetMap contributors</text></g><text x="1678.44" y="875.70" font-size="15.8" fill="#333" textLength="221.58" lengthAdjust="spacingAndGlyphs">© OpenStreetMap contributors</text><path d="M1694.4 878.3 H1899.6" stroke="#333" stroke-width="1"/></svg>

</div>
</body>
</html>
